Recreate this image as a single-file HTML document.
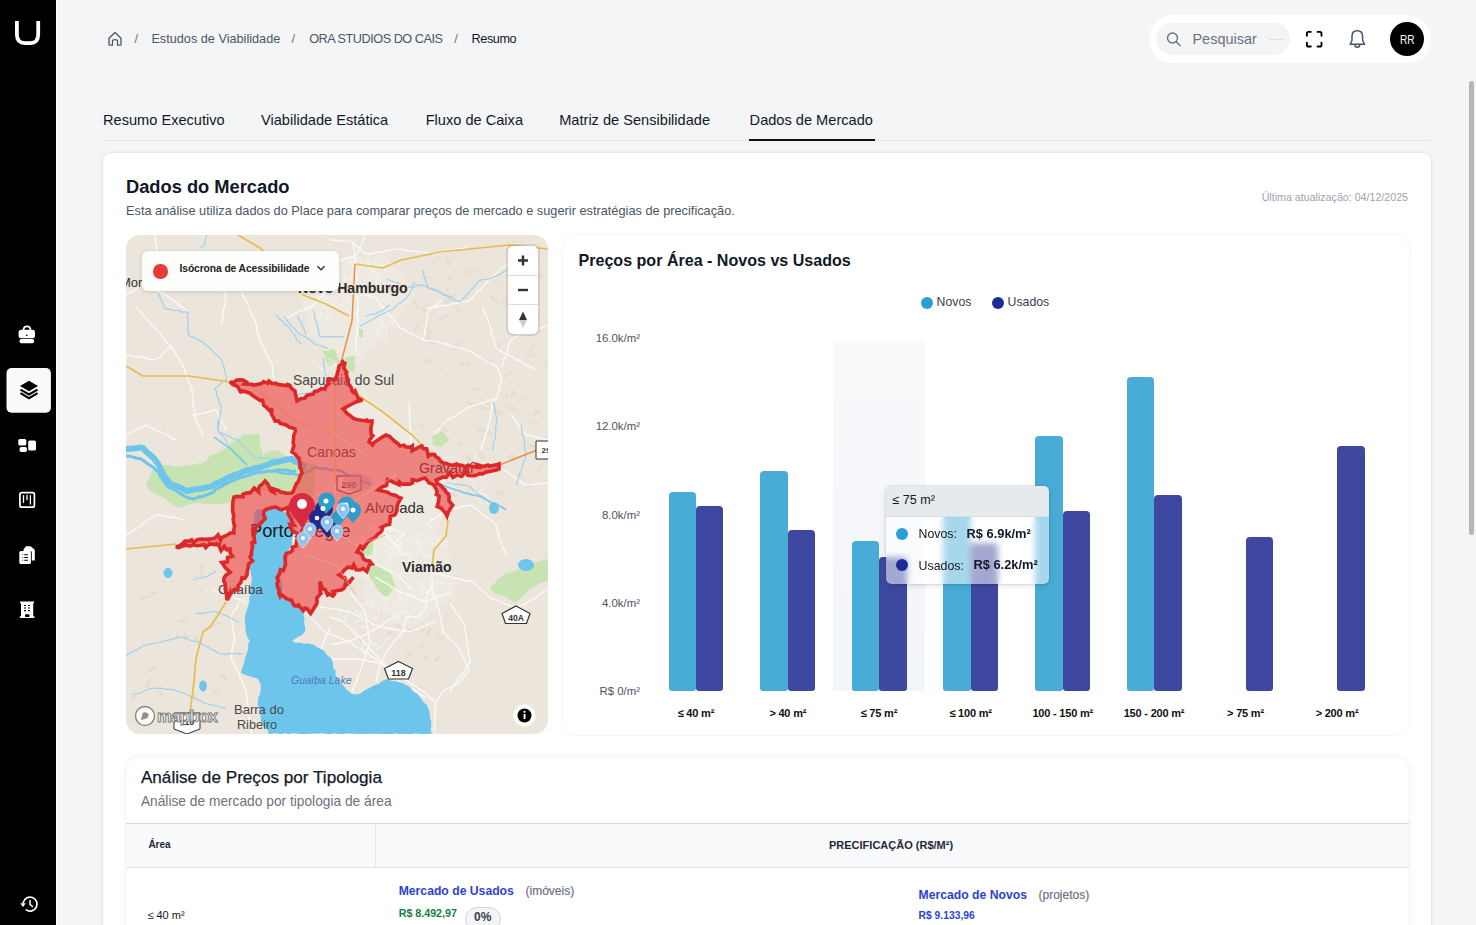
<!DOCTYPE html>
<html><head><meta charset="utf-8">
<style>
*{box-sizing:border-box;margin:0;padding:0}
html,body{width:1476px;height:925px;overflow:hidden}
body{font-family:"Liberation Sans",sans-serif;background:#f4f5f7;position:relative;color:#111827}
.abs{position:absolute}
.t{position:absolute;white-space:nowrap;line-height:1}
#side{left:0;top:0;width:56px;height:925px;background:#000}
#sideline{left:56px;top:0;width:1px;height:925px;background:#fff}
#pill{left:1149px;top:15px;width:282px;height:48px;border-radius:24px;background:#fff}
#search{left:1156px;top:23px;width:134px;height:32px;border-radius:16px;background:#f3f4f6}
#avatar{left:1390px;top:22px;width:34px;height:34px;border-radius:50%;background:#000}
#tabline{left:103px;top:140px;width:1328px;height:1px;background:#e5e7eb}
#tabul{left:749px;top:139px;width:126px;height:2px;background:#111}
#card{left:103px;top:153px;width:1328px;height:800px;background:#fff;border-radius:8px;box-shadow:0 0 0 1px rgba(0,0,0,0.02),0 0 5px rgba(0,0,0,0.07)}
#map{left:126px;top:235px;width:422px;height:499px;border-radius:14px;overflow:hidden;background:#ece6dd;box-shadow:0 0 0 1px rgba(0,0,0,0.07)}
#chart{left:563px;top:235px;width:846px;height:500px;border-radius:14px;background:#fff;box-shadow:0 0 0 1px rgba(0,0,0,0.015),0 0 4px rgba(0,0,0,0.04)}
#card2{left:126px;top:757px;width:1283px;height:300px;border-radius:12px;background:#fff;box-shadow:0 0 0 1px rgba(0,0,0,0.02),0 0 6px rgba(0,0,0,0.06);overflow:hidden}
#scroll{left:1469px;top:81px;width:5px;height:454px;border-radius:3px;background:#b5b6b8}
.bar{position:absolute;border-radius:4px 4px 3px 3px}
.nv{background:#48acd6}
.us{background:#3f48a0}
.xl{position:absolute;top:707px;font-size:11px;font-weight:700;color:#111;width:100px;text-align:center;line-height:12px;letter-spacing:-0.2px}
.yl{position:absolute;left:560px;width:80px;text-align:right;font-size:11.4px;color:#4b5563;line-height:12px}
</style></head>
<body>
<div id="side" class="abs"></div>
<div id="sideline" class="abs"></div>
<div id="scroll" class="abs"></div>
<!-- sidebar icons -->
<svg class="abs" style="left:0;top:0" width="56" height="925" viewBox="0 0 56 925">
  <path d="M16.9,21 V34.5 Q16.9,43.1 25,43.1 H30.5 Q38.2,43.1 38.2,34.5 V21" fill="none" stroke="#fff" stroke-width="3.8"/>
  <!-- briefcase -->
  <path d="M23.5,330.5 Q23.5,326.3 27,326.3 Q30.5,326.3 30.5,330.5" fill="none" stroke="#fff" stroke-width="1.8"/>
  <rect x="18.6" y="329.8" width="16.4" height="8.4" rx="2.5" fill="#fff"/>
  <rect x="19.5" y="339" width="14.6" height="4.2" rx="1.8" fill="#fff"/>
  <circle cx="26.8" cy="335.4" r="0.8" fill="#000"/>
  <!-- active box -->
  <rect x="6.5" y="368" width="44.4" height="44.7" rx="5" fill="#f8f9fb"/>
  <path d="M29,380.8 L38,386 L29,391.2 L20,386 Z" fill="#000"/>
  <path d="M20.5,389.6 L29,394.5 L37.5,389.6" fill="none" stroke="#000" stroke-width="2.1" stroke-linejoin="miter"/>
  <path d="M20.5,393.2 L29,398.2 L37.5,393.2" fill="none" stroke="#000" stroke-width="2.1"/>
  <!-- dashboard -->
  <rect x="18.3" y="439" width="8" height="6.6" rx="1.6" fill="#fff"/>
  <rect x="19.6" y="446.9" width="7.3" height="5" rx="1.6" fill="#fff"/>
  <rect x="28.2" y="440.4" width="7.8" height="10.2" rx="1.6" fill="#fff"/>
  <!-- kanban -->
  <rect x="19.9" y="492.7" width="14.5" height="14.5" rx="2" fill="none" stroke="#fff" stroke-width="1.7"/>
  <path d="M23.5,495.6 V502.3 M27,495.4 V499.7 M30.4,495.6 V504" stroke="#fff" stroke-width="1.3" stroke-linecap="round"/>
  <!-- copy docs -->
  <path d="M23.5,549.5 L26,546.3 H30.5 L34.8,549.8 V560.5 H31.8 V551.6 H23.5 Z" fill="#fff"/>
  <rect x="19.3" y="551" width="11.6" height="13" rx="1.6" fill="#fff"/>
  <path d="M22.5,554.8 H23.2 M24.2,554.8 H28 M22.5,557.5 H23.2 M24.2,557.5 H28 M22.5,560.2 H23.2 M24.2,560.2 H28" stroke="#000" stroke-width="1.1"/>
  <!-- building -->
  <path d="M20,601.5 H34 V603.2 H33.2 V616.3 H34.4 V618 H19.8 V616.3 H21 V603.2 H20.2 Z" fill="#fff"/>
  <path d="M24,605.5 H26 M28,605.5 H30 M24,608 H26 M28,608 H30 M24,610.7 H26 M28,610.7 H30" stroke="#000" stroke-width="1.2"/>
  <rect x="25" y="614.2" width="4.5" height="2.8" rx="0.8" fill="#000"/>
  <!-- history -->
  <path d="M23.2,902.6 A7,7 0 1 1 26.2,909.9" fill="none" stroke="#fff" stroke-width="1.7" stroke-linecap="round"/>
  <path d="M20.3,903.3 L25.8,903.3 L23,906.9 Z" fill="#fff"/>
  <path d="M30,900.4 V904.3 L32.4,906.5" fill="none" stroke="#fff" stroke-width="1.5" stroke-linecap="round"/>
</svg>

<!-- header -->
<svg class="abs" style="left:106px;top:30px" width="18" height="18" viewBox="0 0 18 18">
  <path d="M3,8.2 L9,2.6 L15,8.2 V14.5 Q15,15.2 14.3,15.2 H11.5 V10.9 Q11.5,9.6 9,9.6 Q6.5,9.6 6.5,10.9 V15.2 H3.7 Q3,15.2 3,14.5 Z" fill="none" stroke="#4b5563" stroke-width="1.3" stroke-linejoin="round"/>
</svg>
<div class="t" style="left:134.5px;top:32.5px;font-size:12.7px;color:#6b7280">/</div>
<div class="t" style="left:151.4px;top:32.5px;font-size:12.7px;color:#4b5563">Estudos de Viabilidade</div>
<div class="t" style="left:291.5px;top:32.5px;font-size:12.7px;color:#6b7280">/</div>
<div class="t" style="left:309.2px;top:32.5px;font-size:12.7px;color:#4b5563;letter-spacing:-0.48px">ORA STUDIOS DO CAIS</div>
<div class="t" style="left:454.2px;top:32.5px;font-size:12.7px;color:#6b7280">/</div>
<div class="t" style="left:471.6px;top:32.5px;font-size:12.7px;color:#111827;letter-spacing:-0.45px">Resumo</div>

<div id="pill" class="abs"></div>
<div id="search" class="abs"></div>
<svg class="abs" style="left:1164px;top:30px" width="20" height="18" viewBox="0 0 20 18">
  <circle cx="8.5" cy="8" r="5" fill="none" stroke="#6b7280" stroke-width="1.4"/>
  <path d="M12.2,11.7 L16,15.5" stroke="#6b7280" stroke-width="1.4" stroke-linecap="round"/>
</svg>
<div class="t" style="left:1192.4px;top:31.9px;font-size:14.5px;color:#6b7280">Pesquisar</div>
<div class="abs" style="left:1269px;top:38.5px;width:16px;height:1.5px;background:#dfe2e6"></div>
<svg class="abs" style="left:1304px;top:29px" width="20" height="20" viewBox="0 0 20 20">
  <path d="M2.9,6.8 V4.5 Q2.9,2.9 4.5,2.9 H6.8 M13.6,2.9 H15.9 Q17.5,2.9 17.5,4.5 V6.8 M17.5,13.6 V15.9 Q17.5,17.5 15.9,17.5 H13.6 M6.8,17.5 H4.5 Q2.9,17.5 2.9,15.9 V13.6" fill="none" stroke="#000" stroke-width="1.9" stroke-linecap="round"/>
</svg>
<svg class="abs" style="left:1347px;top:29px" width="20" height="20" viewBox="0 0 20 20">
  <path d="M3.2,15.2 L5,11.2 V7.4 Q5,1.8 10.3,1.8 Q15.6,1.8 15.6,7.4 V11.2 L17.5,15.2 Z" fill="none" stroke="#475569" stroke-width="1.5" stroke-linejoin="round"/>
  <path d="M7.8,15.5 Q7.8,18.3 10.3,18.3 Q12.8,18.3 12.8,15.5" fill="none" stroke="#475569" stroke-width="1.5"/>
</svg>
<div id="avatar" class="abs"></div>
<div class="t" style="left:1399.6px;top:32.9px;font-size:13px;color:#fff;transform:scaleX(0.78);transform-origin:0 0">RR</div>

<!-- tabs -->
<div class="t" style="left:103px;top:112.6px;font-size:14.6px;color:#111827">Resumo Executivo</div>
<div class="t" style="left:261px;top:112.6px;font-size:14.6px;color:#111827">Viabilidade Estática</div>
<div class="t" style="left:425.7px;top:112.6px;font-size:14.6px;color:#111827">Fluxo de Caixa</div>
<div class="t" style="left:559.2px;top:112.6px;font-size:14.6px;color:#111827">Matriz de Sensibilidade</div>
<div class="t" style="left:749.6px;top:112.6px;font-size:14.6px;color:#111827">Dados de Mercado</div>
<div id="tabline" class="abs"></div>
<div id="tabul" class="abs"></div>

<div id="card" class="abs"></div>
<div class="t" style="left:126px;top:177.9px;font-size:18.3px;font-weight:700;color:#111827">Dados do Mercado</div>
<div class="t" style="left:126px;top:205.4px;font-size:12.77px;color:#4b5563">Esta análise utiliza dados do Place para comparar preços de mercado e sugerir estratégias de precificação.</div>
<div class="t" style="left:1258px;top:191.7px;font-size:10.66px;color:#9ca3af;width:150px;text-align:right">Última atualização: 04/12/2025</div>
<svg class="abs" style="left:126px;top:235px" width="422" height="499" viewBox="0 0 422 499">
<defs><clipPath id="mc"><rect x="0" y="0" width="422" height="499" rx="14"/></clipPath></defs>
<g clip-path="url(#mc)">
<rect width="422" height="499" fill="#ebe5dc"/>
<ellipse cx="350" cy="154" rx="6.6" ry="1.7" transform="rotate(1 350 154)" fill="#ddd6c8" opacity="0.45"/>
<ellipse cx="368" cy="64" rx="4.6" ry="1.9" transform="rotate(41 368 64)" fill="#ddd6c8" opacity="0.45"/>
<ellipse cx="302" cy="93" rx="2.5" ry="2.2" transform="rotate(27 302 93)" fill="#ddd6c8" opacity="0.45"/>
<ellipse cx="296" cy="256" rx="6.8" ry="2.0" transform="rotate(16 296 256)" fill="#ddd6c8" opacity="0.45"/>
<ellipse cx="311" cy="24" rx="4.6" ry="1.1" transform="rotate(-43 311 24)" fill="#ddd6c8" opacity="0.45"/>
<ellipse cx="322" cy="27" rx="4.3" ry="1.7" transform="rotate(48 322 27)" fill="#ddd6c8" opacity="0.45"/>
<ellipse cx="359" cy="174" rx="4.5" ry="2.0" transform="rotate(-6 359 174)" fill="#ddd6c8" opacity="0.45"/>
<ellipse cx="327" cy="259" rx="7.0" ry="2.3" transform="rotate(29 327 259)" fill="#ddd6c8" opacity="0.45"/>
<ellipse cx="332" cy="75" rx="3.4" ry="1.1" transform="rotate(37 332 75)" fill="#ddd6c8" opacity="0.45"/>
<ellipse cx="343" cy="223" rx="3.9" ry="2.4" transform="rotate(49 343 223)" fill="#ddd6c8" opacity="0.45"/>
<ellipse cx="290" cy="70" rx="6.6" ry="1.7" transform="rotate(67 290 70)" fill="#ddd6c8" opacity="0.45"/>
<ellipse cx="342" cy="38" rx="5.1" ry="2.2" transform="rotate(-32 342 38)" fill="#ddd6c8" opacity="0.45"/>
<ellipse cx="302" cy="100" rx="6.8" ry="2.1" transform="rotate(-53 302 100)" fill="#ddd6c8" opacity="0.45"/>
<ellipse cx="323" cy="44" rx="2.3" ry="2.2" transform="rotate(-45 323 44)" fill="#ddd6c8" opacity="0.45"/>
<ellipse cx="364" cy="127" rx="3.0" ry="2.1" transform="rotate(-52 364 127)" fill="#ddd6c8" opacity="0.45"/>
<ellipse cx="375" cy="48" rx="4.1" ry="1.3" transform="rotate(-32 375 48)" fill="#ddd6c8" opacity="0.45"/>
<ellipse cx="418" cy="213" rx="3.5" ry="2.3" transform="rotate(-41 418 213)" fill="#ddd6c8" opacity="0.45"/>
<ellipse cx="342" cy="225" rx="5.2" ry="1.2" transform="rotate(69 342 225)" fill="#ddd6c8" opacity="0.45"/>
<ellipse cx="318" cy="82" rx="5.9" ry="1.5" transform="rotate(-29 318 82)" fill="#ddd6c8" opacity="0.45"/>
<ellipse cx="300" cy="42" rx="4.9" ry="1.4" transform="rotate(14 300 42)" fill="#ddd6c8" opacity="0.45"/>
<ellipse cx="339" cy="129" rx="6.8" ry="1.7" transform="rotate(10 339 129)" fill="#ddd6c8" opacity="0.45"/>
<ellipse cx="404" cy="64" rx="2.8" ry="2.4" transform="rotate(44 404 64)" fill="#ddd6c8" opacity="0.45"/>
<ellipse cx="323" cy="66" rx="5.7" ry="2.4" transform="rotate(-42 323 66)" fill="#ddd6c8" opacity="0.45"/>
<ellipse cx="415" cy="232" rx="5.0" ry="1.6" transform="rotate(-55 415 232)" fill="#ddd6c8" opacity="0.45"/>
<ellipse cx="295" cy="251" rx="3.2" ry="2.1" transform="rotate(-34 295 251)" fill="#ddd6c8" opacity="0.45"/>
<ellipse cx="399" cy="163" rx="3.5" ry="1.3" transform="rotate(31 399 163)" fill="#ddd6c8" opacity="0.45"/>
<ellipse cx="299" cy="75" rx="4.8" ry="2.3" transform="rotate(16 299 75)" fill="#ddd6c8" opacity="0.45"/>
<ellipse cx="327" cy="240" rx="3.0" ry="1.0" transform="rotate(-32 327 240)" fill="#ddd6c8" opacity="0.45"/>
<ellipse cx="349" cy="35" rx="2.9" ry="1.6" transform="rotate(10 349 35)" fill="#ddd6c8" opacity="0.45"/>
<ellipse cx="307" cy="107" rx="6.5" ry="2.5" transform="rotate(22 307 107)" fill="#ddd6c8" opacity="0.45"/>
<ellipse cx="381" cy="160" rx="2.7" ry="1.1" transform="rotate(-67 381 160)" fill="#ddd6c8" opacity="0.45"/>
<ellipse cx="410" cy="188" rx="6.8" ry="1.0" transform="rotate(19 410 188)" fill="#ddd6c8" opacity="0.45"/>
<ellipse cx="354" cy="195" rx="3.6" ry="2.5" transform="rotate(-59 354 195)" fill="#ddd6c8" opacity="0.45"/>
<ellipse cx="362" cy="197" rx="6.5" ry="2.1" transform="rotate(29 362 197)" fill="#ddd6c8" opacity="0.45"/>
<ellipse cx="395" cy="240" rx="3.8" ry="2.0" transform="rotate(56 395 240)" fill="#ddd6c8" opacity="0.45"/>
<ellipse cx="405" cy="120" rx="6.0" ry="2.3" transform="rotate(10 405 120)" fill="#ddd6c8" opacity="0.45"/>
<ellipse cx="372" cy="112" rx="4.9" ry="1.9" transform="rotate(-59 372 112)" fill="#ddd6c8" opacity="0.45"/>
<ellipse cx="374" cy="258" rx="6.4" ry="2.1" transform="rotate(-16 374 258)" fill="#ddd6c8" opacity="0.45"/>
<ellipse cx="387" cy="159" rx="4.2" ry="2.3" transform="rotate(-58 387 159)" fill="#ddd6c8" opacity="0.45"/>
<ellipse cx="389" cy="27" rx="5.0" ry="1.7" transform="rotate(-38 389 27)" fill="#ddd6c8" opacity="0.45"/>
<ellipse cx="382" cy="139" rx="5.1" ry="2.4" transform="rotate(-34 382 139)" fill="#ddd6c8" opacity="0.45"/>
<ellipse cx="291" cy="92" rx="5.4" ry="1.3" transform="rotate(-46 291 92)" fill="#ddd6c8" opacity="0.45"/>
<ellipse cx="410" cy="178" rx="4.2" ry="2.3" transform="rotate(-24 410 178)" fill="#ddd6c8" opacity="0.45"/>
<ellipse cx="378" cy="68" rx="4.2" ry="2.2" transform="rotate(58 378 68)" fill="#ddd6c8" opacity="0.45"/>
<ellipse cx="406" cy="112" rx="4.9" ry="1.5" transform="rotate(-51 406 112)" fill="#ddd6c8" opacity="0.45"/>
<ellipse cx="356" cy="221" rx="6.2" ry="2.1" transform="rotate(63 356 221)" fill="#ddd6c8" opacity="0.45"/>
<ellipse cx="327" cy="61" rx="4.3" ry="1.4" transform="rotate(-40 327 61)" fill="#ddd6c8" opacity="0.45"/>
<ellipse cx="345" cy="170" rx="4.5" ry="1.5" transform="rotate(47 345 170)" fill="#ddd6c8" opacity="0.45"/>
<ellipse cx="420" cy="129" rx="2.4" ry="1.0" transform="rotate(52 420 129)" fill="#ddd6c8" opacity="0.45"/>
<ellipse cx="295" cy="190" rx="4.9" ry="1.5" transform="rotate(41 295 190)" fill="#ddd6c8" opacity="0.45"/>
<ellipse cx="293" cy="53" rx="4.3" ry="1.0" transform="rotate(46 293 53)" fill="#ddd6c8" opacity="0.45"/>
<ellipse cx="321" cy="54" rx="2.2" ry="1.9" transform="rotate(-7 321 54)" fill="#ddd6c8" opacity="0.45"/>
<ellipse cx="373" cy="177" rx="6.0" ry="2.4" transform="rotate(26 373 177)" fill="#ddd6c8" opacity="0.45"/>
<ellipse cx="316" cy="134" rx="2.9" ry="1.0" transform="rotate(-4 316 134)" fill="#ddd6c8" opacity="0.45"/>
<ellipse cx="384" cy="63" rx="3.4" ry="1.5" transform="rotate(28 384 63)" fill="#ddd6c8" opacity="0.45"/>
<ellipse cx="359" cy="167" rx="5.8" ry="1.6" transform="rotate(41 359 167)" fill="#ddd6c8" opacity="0.45"/>
<ellipse cx="410" cy="41" rx="6.7" ry="2.1" transform="rotate(-52 410 41)" fill="#ddd6c8" opacity="0.45"/>
<ellipse cx="350" cy="170" rx="6.5" ry="1.6" transform="rotate(10 350 170)" fill="#ddd6c8" opacity="0.45"/>
<ellipse cx="406" cy="211" rx="6.7" ry="1.7" transform="rotate(21 406 211)" fill="#ddd6c8" opacity="0.45"/>
<ellipse cx="317" cy="193" rx="6.1" ry="2.0" transform="rotate(30 317 193)" fill="#ddd6c8" opacity="0.45"/>
<ellipse cx="318" cy="236" rx="6.9" ry="2.5" transform="rotate(5 318 236)" fill="#ddd6c8" opacity="0.45"/>
<ellipse cx="394" cy="97" rx="6.5" ry="2.3" transform="rotate(-21 394 97)" fill="#ddd6c8" opacity="0.45"/>
<ellipse cx="301" cy="126" rx="4.8" ry="2.2" transform="rotate(-2 301 126)" fill="#ddd6c8" opacity="0.45"/>
<ellipse cx="294" cy="214" rx="2.3" ry="2.2" transform="rotate(-46 294 214)" fill="#ddd6c8" opacity="0.45"/>
<ellipse cx="334" cy="209" rx="2.7" ry="1.2" transform="rotate(2 334 209)" fill="#ddd6c8" opacity="0.45"/>
<ellipse cx="386" cy="222" rx="5.4" ry="2.4" transform="rotate(-1 386 222)" fill="#ddd6c8" opacity="0.45"/>
<ellipse cx="415" cy="41" rx="3.1" ry="1.8" transform="rotate(-29 415 41)" fill="#ddd6c8" opacity="0.45"/>
<ellipse cx="386" cy="173" rx="4.6" ry="2.3" transform="rotate(8 386 173)" fill="#ddd6c8" opacity="0.45"/>
<ellipse cx="331" cy="111" rx="6.2" ry="2.4" transform="rotate(-41 331 111)" fill="#ddd6c8" opacity="0.45"/>
<ellipse cx="402" cy="252" rx="4.6" ry="1.9" transform="rotate(-42 402 252)" fill="#ddd6c8" opacity="0.45"/>
<ellipse cx="59" cy="400" rx="3.8" ry="1.0" transform="rotate(66 59 400)" fill="#dcd5c6" opacity="0.5"/>
<ellipse cx="57" cy="386" rx="4.4" ry="1.6" transform="rotate(-1 57 386)" fill="#dcd5c6" opacity="0.5"/>
<ellipse cx="76" cy="339" rx="3.6" ry="1.4" transform="rotate(64 76 339)" fill="#dcd5c6" opacity="0.5"/>
<ellipse cx="102" cy="368" rx="3.4" ry="1.1" transform="rotate(-9 102 368)" fill="#dcd5c6" opacity="0.5"/>
<ellipse cx="90" cy="456" rx="3.4" ry="1.3" transform="rotate(-43 90 456)" fill="#dcd5c6" opacity="0.5"/>
<ellipse cx="68" cy="460" rx="2.4" ry="1.8" transform="rotate(-67 68 460)" fill="#dcd5c6" opacity="0.5"/>
<ellipse cx="21" cy="362" rx="4.1" ry="1.3" transform="rotate(-20 21 362)" fill="#dcd5c6" opacity="0.5"/>
<ellipse cx="68" cy="345" rx="4.2" ry="1.1" transform="rotate(1 68 345)" fill="#dcd5c6" opacity="0.5"/>
<ellipse cx="28" cy="358" rx="3.6" ry="1.4" transform="rotate(-17 28 358)" fill="#dcd5c6" opacity="0.5"/>
<ellipse cx="45" cy="404" rx="2.5" ry="1.2" transform="rotate(18 45 404)" fill="#dcd5c6" opacity="0.5"/>
<ellipse cx="70" cy="404" rx="4.6" ry="1.6" transform="rotate(50 70 404)" fill="#dcd5c6" opacity="0.5"/>
<ellipse cx="26" cy="434" rx="4.4" ry="1.9" transform="rotate(-26 26 434)" fill="#dcd5c6" opacity="0.5"/>
<ellipse cx="35" cy="459" rx="2.7" ry="2.0" transform="rotate(54 35 459)" fill="#dcd5c6" opacity="0.5"/>
<ellipse cx="15" cy="364" rx="4.2" ry="1.3" transform="rotate(-56 15 364)" fill="#dcd5c6" opacity="0.5"/>
<ellipse cx="92" cy="389" rx="4.4" ry="1.1" transform="rotate(-14 92 389)" fill="#dcd5c6" opacity="0.5"/>
<ellipse cx="75" cy="332" rx="2.6" ry="1.7" transform="rotate(58 75 332)" fill="#dcd5c6" opacity="0.5"/>
<ellipse cx="107" cy="346" rx="3.5" ry="1.8" transform="rotate(0 107 346)" fill="#dcd5c6" opacity="0.5"/>
<ellipse cx="75" cy="356" rx="2.2" ry="1.1" transform="rotate(-65 75 356)" fill="#dcd5c6" opacity="0.5"/>
<ellipse cx="61" cy="402" rx="3.7" ry="1.1" transform="rotate(-44 61 402)" fill="#dcd5c6" opacity="0.5"/>
<ellipse cx="22" cy="448" rx="5.0" ry="1.9" transform="rotate(-57 22 448)" fill="#dcd5c6" opacity="0.5"/>
<ellipse cx="7" cy="463" rx="3.4" ry="1.8" transform="rotate(-24 7 463)" fill="#dcd5c6" opacity="0.5"/>
<ellipse cx="51" cy="402" rx="3.3" ry="1.6" transform="rotate(-68 51 402)" fill="#dcd5c6" opacity="0.5"/>
<ellipse cx="77" cy="448" rx="2.5" ry="1.5" transform="rotate(34 77 448)" fill="#dcd5c6" opacity="0.5"/>
<ellipse cx="45" cy="357" rx="2.5" ry="1.5" transform="rotate(-68 45 357)" fill="#dcd5c6" opacity="0.5"/>
<ellipse cx="98" cy="442" rx="4.1" ry="1.9" transform="rotate(18 98 442)" fill="#dcd5c6" opacity="0.5"/>
<ellipse cx="266" cy="438" rx="3.5" ry="2.0" transform="rotate(43 266 438)" fill="#dcd5c6" opacity="0.5"/>
<ellipse cx="253" cy="463" rx="4.2" ry="1.8" transform="rotate(44 253 463)" fill="#dcd5c6" opacity="0.5"/>
<ellipse cx="267" cy="462" rx="4.6" ry="1.7" transform="rotate(37 267 462)" fill="#dcd5c6" opacity="0.5"/>
<ellipse cx="299" cy="422" rx="4.2" ry="1.1" transform="rotate(-22 299 422)" fill="#dcd5c6" opacity="0.5"/>
<ellipse cx="272" cy="391" rx="3.1" ry="1.6" transform="rotate(17 272 391)" fill="#dcd5c6" opacity="0.5"/>
<ellipse cx="251" cy="466" rx="4.0" ry="1.3" transform="rotate(22 251 466)" fill="#dcd5c6" opacity="0.5"/>
<ellipse cx="281" cy="433" rx="3.2" ry="2.0" transform="rotate(20 281 433)" fill="#dcd5c6" opacity="0.5"/>
<ellipse cx="293" cy="451" rx="4.9" ry="1.0" transform="rotate(16 293 451)" fill="#dcd5c6" opacity="0.5"/>
<ellipse cx="296" cy="411" rx="3.2" ry="1.1" transform="rotate(-43 296 411)" fill="#dcd5c6" opacity="0.5"/>
<ellipse cx="264" cy="398" rx="2.8" ry="1.9" transform="rotate(7 264 398)" fill="#dcd5c6" opacity="0.5"/>
<ellipse cx="276" cy="467" rx="3.7" ry="2.0" transform="rotate(19 276 467)" fill="#dcd5c6" opacity="0.5"/>
<ellipse cx="303" cy="396" rx="3.8" ry="1.8" transform="rotate(-64 303 396)" fill="#dcd5c6" opacity="0.5"/>
<ellipse cx="314" cy="403" rx="3.4" ry="1.2" transform="rotate(-1 314 403)" fill="#dcd5c6" opacity="0.5"/>
<ellipse cx="285" cy="395" rx="4.8" ry="1.4" transform="rotate(4 285 395)" fill="#dcd5c6" opacity="0.5"/>
<ellipse cx="284" cy="419" rx="2.9" ry="1.7" transform="rotate(8 284 419)" fill="#dcd5c6" opacity="0.5"/>
<ellipse cx="256" cy="447" rx="2.9" ry="1.0" transform="rotate(-36 256 447)" fill="#dcd5c6" opacity="0.5"/>
<ellipse cx="234" cy="403" rx="4.3" ry="1.4" transform="rotate(56 234 403)" fill="#dcd5c6" opacity="0.5"/>
<ellipse cx="297" cy="394" rx="5.0" ry="1.9" transform="rotate(-60 297 394)" fill="#dcd5c6" opacity="0.5"/>
<ellipse cx="311" cy="424" rx="3.4" ry="2.0" transform="rotate(-36 311 424)" fill="#dcd5c6" opacity="0.5"/>
<ellipse cx="277" cy="465" rx="4.2" ry="1.5" transform="rotate(67 277 465)" fill="#dcd5c6" opacity="0.5"/>
<path d="M170.0,25.0 L260.0,20.0 L290.0,60.0 L250.0,110.0 L220.0,130.0 L185.0,100.0 L175.0,60.0 Z" fill="#efebe4" opacity="0.8"/>
<path d="M180.0,150.0 L240.0,160.0 L290.0,200.0 L330.0,250.0 L310.0,300.0 L260.0,330.0 L200.0,360.0 L160.0,320.0 L150.0,250.0 Z" fill="#efebe4" opacity="0.8"/>
<path d="M230.0,300.0 L320.0,300.0 L330.0,360.0 L290.0,390.0 L240.0,370.0 Z" fill="#efebe4" opacity="0.8"/>
<path d="M20.0,249.0 L23.6,242.7 L26.0,236.0 L31.2,233.2 L38.0,230.0 L42.9,230.1 L47.1,231.4 L53.0,232.0 L57.4,230.9 L63.7,229.9 L68.1,229.2 L73.6,228.6 L79.0,227.0 L85.0,220.0 L91.6,218.0 L98.0,214.0 L102.9,211.5 L105.5,207.2 L110.8,205.6 L114.2,201.7 L118.0,199.0 L122.5,199.4 L128.1,199.2 L133.0,199.0 L134.0,204.8 L133.9,209.0 L136.2,215.6 L136.0,220.0 L141.8,217.4 L145.1,216.2 L151.0,215.0 L155.9,217.9 L160.2,220.4 L166.0,223.0 L174.0,226.0 L178.1,226.5 L184.4,228.8 L189.0,230.0 L189.3,234.9 L189.0,239.8 L188.7,246.0 L189.7,249.8 L188.2,256.5 L189.0,261.0 L183.5,260.8 L176.9,259.3 L171.3,259.4 L166.0,258.0 L160.7,257.6 L157.0,256.3 L151.0,256.0 L146.1,256.5 L141.8,255.9 L136.0,256.0 L130.7,255.2 L126.8,255.2 L121.0,256.0 L115.2,259.8 L111.0,263.7 L106.0,267.0 L100.6,268.6 L95.2,268.4 L91.0,270.0 L85.6,268.7 L79.1,269.4 L74.1,268.1 L68.0,268.0 L62.3,269.4 L58.5,271.1 L53.0,273.0 L48.0,270.7 L44.6,268.3 L41.1,265.6 L36.0,262.0 L29.4,259.1 L23.0,255.0 Z" fill="#c7e3b2"/>
<path d="M241.0,334.0 L246.6,331.6 L253.0,330.0 L257.1,334.5 L262.5,336.8 L266.0,341.0 L267.7,346.2 L270.0,352.0 L266.4,355.8 L263.1,359.4 L260.0,364.0 L256.8,360.6 L253.4,356.7 L250.0,352.0 L246.6,345.9 L243.0,341.0 Z" fill="#c7e3b2"/>
<path d="M364.0,352.0 L368.5,349.3 L371.6,344.0 L376.0,341.6 L380.0,338.0 L387.1,336.9 L394.0,334.0 L400.3,332.3 L405.1,329.4 L412.0,327.0 L417.6,324.7 L422.0,324.0 L421.2,329.7 L422.8,333.7 L422.3,339.0 L422.0,345.0 L417.7,347.5 L412.0,348.9 L408.3,351.8 L403.0,354.0 L398.9,358.5 L393.3,364.3 L389.0,368.0 L383.8,364.5 L378.0,361.0 L372.1,359.4 L366.0,357.0 Z" fill="#c7e3b2"/>
<path d="M234.0,310.0 L241.4,308.8 L248.0,306.0 L246.8,313.7 L246.0,320.0 L240.3,320.7 L234.0,320.0 L234.6,315.7 Z" fill="#c7e3b2"/>
<path d="M196.0,116.0 L202.8,115.4 L208.0,113.0 L210.3,118.0 L212.4,123.6 L214.0,128.0 L208.3,129.3 L203.0,131.0 L200.0,126.5 L199.3,120.8 Z" fill="#c7e3b2"/>
<path d="M219.0,123.0 L223.3,121.4 L229.0,121.0 L228.5,125.9 L229.3,130.8 L228.0,137.0 L219.0,136.0 L218.6,128.7 Z" fill="#c7e3b2"/>
<path d="M306.0,201.0 L311.3,199.1 L316.0,196.0 L318.9,199.6 L323.0,205.0 L318.9,208.7 L315.0,212.0 L307.0,210.0 Z" fill="#c7e3b2"/>
<path d="M233.0,94.0 L237.0,94.0 L237.0,102.0 L233.0,102.0 Z" fill="#c7e3b2"/>
<path d="M172.0,499.0 L176.6,494.3 L178.7,490.9 L182.7,487.2 L187.0,484.0 L188.4,489.2 L188.4,493.4 L190.0,499.0 L183.6,498.3 L178.5,498.6 Z" fill="#c7e3b2"/>
<path d="M29.0,0.0 L29.6,4.6 L30.0,8.2 L31.0,13.2 L31.0,17.0 L28.8,21.4 L27.5,25.6 L25.0,30.0" fill="none" stroke="#fbfaf7" stroke-width="1.4" stroke-linejoin="round"/>
<path d="M9.0,71.0 L11.5,73.6 L15.2,77.7 L17.4,80.5 L20.4,83.4 L23.8,87.0 L25.7,89.4 L28.8,93.0 L32.0,96.6 L34.6,99.1 L36.9,102.5 L39.9,106.3 L43.0,109.0 L45.4,112.8 L48.3,116.1 L50.0,119.6 L52.7,123.1 L55.1,127.7 L57.0,131.0 L58.9,134.3 L59.7,138.9 L61.0,142.5 L63.0,146.9 L64.6,150.6 L66.0,154.0 L66.2,158.5 L66.8,162.8 L66.8,166.8 L67.4,170.6 L68.2,174.3 L69.0,178.6 L69.0,183.0 L70.8,186.7 L72.8,191.5 L75.3,195.6 L77.0,200.0" fill="none" stroke="#fbfaf7" stroke-width="1.4" stroke-linejoin="round"/>
<path d="M114.0,54.0 L116.1,57.5 L117.6,62.0 L120.2,66.4 L121.7,69.4 L123.2,74.3 L124.9,78.1 L127.1,81.4 L129.0,86.0 L130.6,90.4 L130.6,94.1 L131.7,97.9 L133.0,101.8 L134.0,106.0 L135.8,109.7 L138.2,113.4 L139.6,117.8 L141.8,121.9 L144.1,125.4 L146.0,129.0 L146.4,133.4 L146.7,136.6 L147.3,141.2 L148.6,144.6 L149.0,149.0" fill="none" stroke="#fbfaf7" stroke-width="1.4" stroke-linejoin="round"/>
<path d="M160.0,83.0 L163.6,81.7 L167.5,79.1 L170.8,77.4 L174.4,76.0 L178.1,74.9 L182.2,72.7 L186.0,71.0 L189.7,67.8 L193.4,63.9 L196.3,60.4 L200.0,57.0" fill="none" stroke="#fbfaf7" stroke-width="1.4" stroke-linejoin="round"/>
<path d="M0.0,60.0 L2.8,57.7 L7.0,56.2 L10.5,53.6 L13.7,50.6 L17.0,49.0 L20.6,50.6 L24.8,52.2 L28.4,54.5 L32.7,56.7 L36.3,57.8 L40.0,60.0 L43.7,63.0 L46.7,64.8 L50.0,67.1 L53.6,70.6 L56.7,72.8 L60.0,75.0" fill="none" stroke="#fbfaf7" stroke-width="1.4" stroke-linejoin="round"/>
<path d="M274.0,93.0 L278.2,94.6 L282.2,97.2 L285.1,98.5 L289.0,101.1 L293.4,102.8 L297.0,105.0 L302.1,105.6 L306.2,106.1 L311.4,107.0 L315.9,108.3 L320.0,109.0 L323.9,110.2 L327.4,111.8 L332.1,112.9 L335.5,113.2 L339.6,114.6 L343.0,116.0 L347.0,117.7 L350.1,120.4 L353.1,122.1 L356.5,123.4 L360.1,126.6 L364.5,128.2 L367.3,130.2 L371.0,132.0 L373.0,135.9 L374.4,140.4 L376.0,144.0 L374.2,148.4 L373.5,153.1 L372.1,158.3 L371.0,163.0 L366.6,164.3 L362.7,165.7 L358.8,167.0 L354.4,168.3 L350.6,170.0 L347.1,170.7 L343.0,172.0 L339.1,174.5 L335.6,177.0 L331.8,179.0 L328.3,181.7 L324.3,183.6 L320.0,186.0 L317.2,189.1 L315.0,192.0 L311.8,194.9 L309.0,198.0" fill="none" stroke="#fbfaf7" stroke-width="1.4" stroke-linejoin="round"/>
<path d="M376.0,132.0 L377.8,127.9 L378.0,124.6 L380.3,120.7 L381.3,116.9 L382.2,112.8 L383.2,108.4 L385.0,105.0 L388.9,102.7 L392.9,99.8 L397.0,98.0 L401.4,96.7 L405.0,95.1 L409.4,93.7 L413.1,93.2 L418.4,91.5 L422.0,90.0" fill="none" stroke="#fbfaf7" stroke-width="1.4" stroke-linejoin="round"/>
<path d="M297.0,105.0 L298.2,100.9 L298.8,96.7 L299.4,93.1 L300.3,88.5 L300.9,84.5 L301.3,81.5 L302.0,77.0 L304.9,73.7 L308.8,70.8 L312.0,68.5 L316.0,65.0" fill="none" stroke="#fbfaf7" stroke-width="1.4" stroke-linejoin="round"/>
<path d="M204.0,5.0 L209.0,5.3 L213.0,5.9 L217.3,5.6 L222.9,6.4 L227.0,7.0 L230.0,10.5 L233.6,13.0 L235.6,15.8 L239.0,19.0 L243.9,18.9 L247.4,18.2 L251.9,17.1 L256.1,17.0 L261.5,15.5 L265.4,14.9 L270.1,14.1 L274.0,14.0 L277.9,14.9 L282.5,15.7 L287.6,16.1 L291.1,16.7 L296.4,17.1 L299.7,17.4 L304.4,18.6 L309.0,19.0 L313.1,17.6 L317.5,17.2 L322.6,15.8 L326.9,15.5 L331.3,13.7 L335.3,13.5 L340.0,12.0" fill="none" stroke="#fbfaf7" stroke-width="1.4" stroke-linejoin="round"/>
<path d="M227.0,7.0 L227.8,11.3 L228.4,15.7 L229.4,20.7 L229.4,25.4 L230.0,30.0 L229.7,34.1 L230.1,37.7 L231.0,41.5 L230.5,46.3 L230.7,49.7 L231.3,53.6 L231.9,58.6 L231.0,62.0 L232.1,65.9 L232.0,70.0 L232.3,74.2 L231.3,78.4 L231.6,82.4 L231.5,87.1 L231.1,90.9 L231.3,95.3 L230.8,99.8 L230.2,103.8 L230.0,107.8 L229.9,111.7 L230.0,116.0" fill="none" stroke="#fbfaf7" stroke-width="1.4" stroke-linejoin="round"/>
<path d="M232.0,58.0 L236.8,59.6 L241.3,60.2 L245.5,61.4 L250.0,63.0 L252.8,66.3 L254.8,69.8 L258.3,73.1 L261.1,75.9 L262.9,79.1 L266.0,82.9 L268.6,86.0 L271.7,89.2 L274.0,93.0" fill="none" stroke="#fbfaf7" stroke-width="1.4" stroke-linejoin="round"/>
<path d="M283.0,167.0 L283.7,171.3 L283.5,175.7 L283.3,179.2 L283.6,183.3 L283.8,188.1 L284.2,191.9 L284.5,195.9 L285.0,200.2 L284.5,204.4 L285.0,209.0" fill="none" stroke="#fbfaf7" stroke-width="1.4" stroke-linejoin="round"/>
<path d="M367.0,163.0 L366.6,168.0 L366.1,171.7 L365.1,176.6 L364.3,182.0 L364.0,186.0 L362.2,190.1 L361.7,194.9 L359.7,198.4 L359.2,202.0 L357.3,207.2 L355.9,210.7 L355.0,215.0" fill="none" stroke="#fbfaf7" stroke-width="1.4" stroke-linejoin="round"/>
<path d="M306.0,338.0 L309.9,338.8 L313.7,339.2 L318.9,341.0 L322.7,341.3 L326.2,342.6 L330.3,343.4 L335.2,344.1 L338.6,345.8 L343.0,345.5 L347.0,347.0 L350.1,350.0 L352.8,352.5 L356.7,355.9 L359.8,358.8 L362.8,361.0 L366.0,364.0 L370.2,365.4 L374.0,366.7 L377.3,368.1 L381.4,369.6 L384.8,371.2 L389.0,373.0 L392.8,371.0 L396.5,370.0 L400.6,368.0 L403.8,365.7 L408.0,364.0 L411.0,361.7 L414.8,358.7 L417.9,356.1 L422.0,354.0" fill="none" stroke="#fbfaf7" stroke-width="1.4" stroke-linejoin="round"/>
<path d="M306.0,338.0 L305.7,341.9 L306.5,346.3 L305.7,349.8 L306.0,354.0 L301.0,359.0 L300.1,363.5 L299.8,367.3 L299.8,371.5 L299.0,375.0 L294.9,378.3 L292.0,382.0 L287.9,381.5 L284.5,381.8 L280.0,382.0 L279.7,386.7 L278.1,391.2 L278.0,396.0 L274.9,398.6 L272.0,402.5 L269.0,405.4 L266.7,408.9 L264.0,412.0 L261.3,416.2 L259.2,420.3 L257.4,423.6 L255.0,428.0 L253.4,432.5 L252.8,437.4 L251.1,442.7 L250.0,447.0" fill="none" stroke="#fbfaf7" stroke-width="1.4" stroke-linejoin="round"/>
<path d="M204.0,382.0 L208.3,383.4 L213.1,385.0 L218.0,387.0 L220.4,389.4 L224.2,393.1 L227.4,396.6 L229.8,399.2 L233.5,401.7 L236.2,405.2 L239.0,408.0 L242.5,411.8 L244.7,414.8 L247.5,417.9 L250.9,420.8 L253.9,424.5 L257.0,428.0 L260.2,430.5 L263.0,433.5 L266.6,436.0 L270.0,438.9 L273.0,442.0 L276.3,443.8 L280.5,445.6 L284.5,448.2 L288.3,450.2 L292.0,452.0 L294.4,454.5 L297.8,456.8 L300.9,459.5 L304.0,462.8 L307.0,465.1 L310.0,468.0 L309.4,471.9 L309.2,477.3 L309.2,481.0 L309.1,485.3 L308.5,490.3 L308.8,494.4 L308.0,499.0" fill="none" stroke="#fbfaf7" stroke-width="1.4" stroke-linejoin="round"/>
<path d="M306.0,354.0 L307.4,358.5 L308.9,362.2 L310.0,365.9 L311.0,369.7 L312.8,374.5 L313.6,378.5 L315.0,382.0 L315.1,386.2 L316.3,391.1 L317.0,396.0 L319.7,399.7 L322.2,402.0 L325.2,405.7 L328.0,408.1 L331.2,411.7 L334.0,415.0 L335.5,419.0 L337.8,423.1 L339.5,427.1 L341.6,431.6 L343.0,435.0 L339.8,438.8 L337.5,442.8 L334.0,447.0 L330.0,449.5 L325.7,452.1 L321.6,453.3 L317.0,456.0 L314.8,460.0 L312.4,463.8 L310.0,468.0" fill="none" stroke="#fbfaf7" stroke-width="1.4" stroke-linejoin="round"/>
<path d="M204.0,424.0 L208.3,424.3 L213.2,423.7 L217.5,423.8 L222.0,424.0 L227.0,424.0 L230.6,424.0 L234.5,424.7 L239.2,425.2 L242.9,426.6 L247.0,426.5 L251.4,427.9 L255.0,428.0" fill="none" stroke="#fbfaf7" stroke-width="1.4" stroke-linejoin="round"/>
<path d="M204.0,410.0 L208.1,408.7 L213.2,408.4 L217.7,407.3 L222.1,406.3 L227.0,405.0 L230.6,403.0 L235.0,401.7 L238.9,399.6 L242.2,397.9 L246.3,396.2 L250.0,394.0 L253.7,391.2 L256.5,389.5 L259.7,386.6 L262.7,384.8 L267.2,382.9 L270.0,380.0" fill="none" stroke="#fbfaf7" stroke-width="1.4" stroke-linejoin="round"/>
<path d="M250.0,329.0 L253.4,331.2 L257.6,333.2 L261.4,335.5 L265.9,336.5 L269.4,338.5 L273.0,341.0 L275.5,344.0 L279.3,348.1 L281.5,350.5 L285.0,354.0" fill="none" stroke="#fbfaf7" stroke-width="1.4" stroke-linejoin="round"/>
<path d="M269.0,308.0 L271.4,305.1 L275.0,301.8 L278.0,299.0 L273.8,297.6 L270.4,295.2 L265.9,293.9 L262.0,292.0" fill="none" stroke="#fbfaf7" stroke-width="1.4" stroke-linejoin="round"/>
<path d="M113.0,368.0 L110.7,372.9 L107.5,376.9 L105.0,381.0 L105.9,386.0 L106.2,389.8 L106.9,395.3 L107.9,399.4 L109.0,404.0 L107.5,408.5 L106.4,413.6 L105.6,418.4 L105.0,423.0 L106.7,426.4 L109.0,430.3 L110.7,433.7 L113.0,438.0 L113.9,442.3 L115.6,445.1 L116.8,449.4 L119.2,452.8 L120.0,457.0 L120.9,461.7 L120.9,466.9 L121.4,470.7 L122.0,476.0 L122.7,480.8 L123.3,484.9 L124.3,490.2 L125.0,494.3 L125.0,499.0" fill="none" stroke="#fbfaf7" stroke-width="1.4" stroke-linejoin="round"/>
<path d="M87.0,355.0 L91.9,356.8 L95.6,357.4 L100.1,359.0 L105.0,361.0 L108.2,362.6 L112.8,364.3 L116.3,365.7 L120.0,368.0" fill="none" stroke="#fbfaf7" stroke-width="1.4" stroke-linejoin="round"/>
<path d="M357.0,71.0 L357.9,75.5 L359.0,78.9 L361.2,83.1 L362.4,86.5 L363.7,90.9 L365.0,95.0 L365.4,98.9 L367.1,102.5 L368.2,106.7 L369.2,110.2 L371.0,114.0 L374.5,115.9 L378.4,118.2 L382.8,119.8 L386.4,121.8 L389.7,124.5 L393.6,125.5 L397.4,128.3 L401.1,130.3 L405.3,132.2 L409.0,134.0" fill="none" stroke="#fbfaf7" stroke-width="1.4" stroke-linejoin="round"/>
<path d="M300.0,74.0 L303.9,72.7 L308.2,72.2 L312.8,71.0 L317.2,70.7 L321.3,70.0 L326.3,68.8 L330.6,68.2 L334.7,67.1 L339.3,66.7 L343.0,66.0 L346.4,62.8 L348.5,60.4 L351.1,57.0 L354.5,54.9 L356.9,51.1 L359.7,49.1 L362.3,45.8 L365.4,42.9 L368.0,40.0 L371.6,37.3 L374.0,34.0 L377.9,32.0 L381.5,29.5 L385.5,28.2 L388.8,26.2 L392.5,23.9 L396.0,22.1 L400.0,20.0" fill="none" stroke="#fbfaf7" stroke-width="1.4" stroke-linejoin="round"/>
<path d="M0.0,200.0 L4.1,198.0 L7.4,196.2 L11.9,194.1 L16.1,192.5 L20.0,190.0 L23.3,191.8 L28.1,194.0 L31.0,195.9 L35.6,197.4 L39.2,198.9 L43.1,201.2 L45.9,203.5 L50.0,205.0" fill="none" stroke="#fbfaf7" stroke-width="1.4" stroke-linejoin="round"/>
<path d="M66.0,180.0 L70.2,179.7 L74.4,178.7 L78.0,178.1 L81.5,177.1 L86.3,175.5 L90.0,175.0 L92.4,178.9 L94.0,183.4 L95.6,186.7 L98.2,190.5 L100.0,195.0" fill="none" stroke="#fbfaf7" stroke-width="1.4" stroke-linejoin="round"/>
<path d="M0.0,300.0 L3.4,298.1 L6.7,295.2 L10.4,293.8 L13.7,291.2 L17.2,289.2 L19.6,286.5 L22.9,283.9 L26.5,282.7 L30.0,280.0 L34.7,280.3 L38.2,281.3 L43.3,282.3 L47.6,282.3 L52.0,283.2 L55.9,284.7 L60.0,285.0" fill="none" stroke="#fbfaf7" stroke-width="1.4" stroke-linejoin="round"/>
<path d="M385.0,180.0 L387.8,183.0 L390.2,186.6 L391.9,189.8 L394.8,193.5 L397.2,196.8 L400.0,200.0 L404.6,200.6 L408.4,202.2 L413.2,202.6 L417.1,204.5 L422.0,205.0" fill="none" stroke="#fbfaf7" stroke-width="1.4" stroke-linejoin="round"/>
<path d="M340.0,240.0 L344.4,238.4 L348.2,237.7 L353.1,236.0 L357.0,234.1 L361.3,232.4 L365.9,231.3 L370.0,230.0 L373.7,232.1 L376.6,234.5 L380.5,236.5 L383.6,238.6 L386.8,240.9 L390.4,243.1 L393.8,245.8 L396.6,248.3 L400.0,250.0 L404.3,249.9 L408.9,249.1 L412.7,248.7 L417.3,248.3 L422.0,248.0" fill="none" stroke="#fbfaf7" stroke-width="1.4" stroke-linejoin="round"/>
<path d="M200.0,30.0 L204.8,28.3 L208.8,27.3 L212.6,25.6 L216.7,24.8 L221.1,22.8 L225.5,21.8 L230.0,20.0 L232.4,16.1 L234.1,11.5 L236.5,7.5 L237.8,3.8 L240.0,0.0" fill="none" stroke="#fbfaf7" stroke-width="1.4" stroke-linejoin="round"/>
<path d="M0.0,120.0 L4.6,120.9 L8.4,121.9 L13.4,121.6 L17.3,122.8 L21.3,123.5 L25.5,124.5 L30.0,125.0 L33.1,122.6 L36.6,119.6 L38.9,116.4 L42.2,113.2 L45.0,110.0" fill="none" stroke="#fbfaf7" stroke-width="1.4" stroke-linejoin="round"/>
<path d="M80.0,30.0 L82.8,32.8 L84.4,36.5 L86.9,39.7 L89.5,43.0 L91.0,46.2 L93.2,50.3 L95.1,52.9 L98.0,56.8 L100.0,60.0 L99.6,64.0 L98.9,68.8 L98.2,72.4 L97.1,76.6 L96.9,82.0 L96.2,85.1 L95.0,90.0" fill="none" stroke="#fbfaf7" stroke-width="1.4" stroke-linejoin="round"/>
<path d="M179.0,377.0 L181.7,379.9 L184.8,382.2 L187.9,385.3 L190.4,388.0 L193.4,390.8 L195.6,394.2 L199.0,397.0 L202.9,399.0 L207.0,400.2 L211.0,401.7 L215.6,403.7 L219.8,405.8 L224.0,407.0 L226.9,409.6 L230.3,412.0 L234.0,413.6 L237.5,416.3 L241.2,418.0 L243.4,419.9 L247.7,422.8 L250.9,424.4 L254.0,427.0 L256.9,429.3 L259.2,432.5 L263.1,435.7 L265.8,437.9 L268.2,440.8 L270.9,443.7 L274.0,447.0 L278.1,448.9 L281.1,451.5 L285.2,454.0 L288.4,455.6 L292.3,457.6 L295.2,460.1 L299.0,462.0" fill="none" stroke="#fbfaf7" stroke-width="1.4" stroke-linejoin="round"/>
<path d="M194.0,372.0 L198.0,372.6 L202.5,373.4 L206.7,374.1 L211.1,374.3 L215.8,375.0 L219.7,376.3 L224.0,377.0 L227.6,378.5 L231.0,380.6 L235.0,382.6 L238.7,384.8 L242.7,385.8 L246.4,388.8 L249.7,390.2 L254.0,392.0 L258.8,392.6 L262.7,393.3 L266.6,394.3 L271.3,394.6 L275.4,395.6 L280.0,395.7 L284.0,397.0 L287.7,395.0 L292.1,394.0 L296.4,392.4 L300.5,390.1 L305.0,388.2 L309.0,387.0" fill="none" stroke="#fbfaf7" stroke-width="1.4" stroke-linejoin="round"/>
<path d="M224.0,357.0 L227.1,360.7 L228.8,363.4 L231.9,367.3 L234.2,369.8 L236.8,373.1 L239.0,377.0 L239.9,381.3 L240.9,385.7 L240.6,390.4 L242.2,394.2 L242.0,398.7 L243.2,402.9 L244.0,407.0 L243.2,411.8 L240.6,415.9 L239.6,420.2 L238.1,424.1 L236.8,428.0 L235.2,433.0 L234.0,437.0 L231.8,440.7 L231.1,445.5 L229.1,449.0 L226.9,453.4 L226.2,457.9 L224.0,462.0" fill="none" stroke="#fbfaf7" stroke-width="1.4" stroke-linejoin="round"/>
<path d="M249.0,342.0 L253.1,343.8 L256.0,346.3 L260.1,348.0 L263.7,350.5 L266.3,352.6 L270.3,355.1 L274.0,357.0 L278.7,358.7 L282.6,360.2 L286.8,361.5 L291.0,363.3 L294.9,365.0 L299.0,367.0 L303.0,364.9 L307.2,363.8 L311.5,361.9 L315.8,360.7 L319.7,358.8 L324.0,357.0" fill="none" stroke="#fbfaf7" stroke-width="1.4" stroke-linejoin="round"/>
<path d="M204.0,392.0 L202.3,396.7 L200.5,400.6 L198.7,404.2 L197.6,408.8 L195.4,412.3 L194.0,417.0 L192.4,420.9 L190.3,424.9 L188.1,429.1 L186.6,433.5 L184.0,437.0" fill="none" stroke="#fbfaf7" stroke-width="1.4" stroke-linejoin="round"/>
<path d="M324.0,367.0 L326.1,370.6 L328.0,374.4 L330.0,377.5 L333.0,380.7 L335.0,384.9 L336.9,388.2 L339.0,392.0 L339.2,396.9 L340.6,401.1 L340.4,405.5 L341.2,409.1 L342.2,414.0 L342.3,418.6 L343.5,423.1 L344.0,427.0 L342.3,430.6 L339.4,434.2 L337.6,436.7 L335.5,440.6 L332.6,443.4 L330.1,447.0 L328.1,450.1 L325.9,453.2 L324.0,457.0" fill="none" stroke="#fbfaf7" stroke-width="1.4" stroke-linejoin="round"/>
<path d="M300.0,290.0 L303.3,287.2 L306.4,284.7 L310.0,282.9 L312.9,280.4 L317.1,277.6 L320.0,275.0 L324.2,274.4 L328.4,273.5 L333.0,272.8 L336.4,271.1 L341.4,270.7 L345.0,270.0 L348.5,272.2 L351.2,274.8 L354.7,278.0 L357.5,280.1 L360.4,282.2 L364.3,284.5 L367.4,287.7 L370.0,290.0 L370.9,294.8 L372.4,298.6 L373.8,303.4 L375.5,307.6 L376.6,311.6 L378.1,315.1 L380.0,320.0" fill="none" stroke="#fbfaf7" stroke-width="1.4" stroke-linejoin="round"/>
<path d="M240.0,290.0 L244.1,292.6 L248.2,294.4 L252.3,296.0 L255.5,298.0 L260.0,300.0 L262.5,302.9 L265.5,305.7 L268.2,308.8 L271.3,311.4 L273.8,314.3 L277.2,317.7 L280.0,320.0" fill="none" stroke="#fbfaf7" stroke-width="1.4" stroke-linejoin="round"/>
<path d="M204.4,84.3 L199.5,84.2 L198.5,87.3" fill="none" stroke="#f9f7f3" stroke-width="0.9" opacity="0.8"/>
<path d="M250.2,31.6 L258.1,29.4 L260.2,34.7" fill="none" stroke="#f9f7f3" stroke-width="0.9" opacity="0.8"/>
<path d="M243.7,43.6 L245.5,35.7 L241.9,26.1" fill="none" stroke="#f9f7f3" stroke-width="0.9" opacity="0.8"/>
<path d="M240.5,25.6 L244.2,35.0 L248.7,35.6 L254.0,44.4" fill="none" stroke="#f9f7f3" stroke-width="0.9" opacity="0.8"/>
<path d="M233.7,49.2 L228.1,48.4 L223.9,38.8 L230.6,39.9 L233.5,33.7" fill="none" stroke="#f9f7f3" stroke-width="0.9" opacity="0.8"/>
<path d="M264.5,85.2 L269.3,93.1 L278.8,93.1" fill="none" stroke="#f9f7f3" stroke-width="0.9" opacity="0.8"/>
<path d="M262.7,60.5 L256.5,56.2 L266.0,56.2 L274.8,54.1 L281.9,53.7" fill="none" stroke="#f9f7f3" stroke-width="0.9" opacity="0.8"/>
<path d="M247.1,53.3 L240.5,54.3 L244.6,57.8 L242.1,56.5 L242.2,62.1" fill="none" stroke="#f9f7f3" stroke-width="0.9" opacity="0.8"/>
<path d="M231.5,52.5 L236.1,51.9 L232.3,58.9 L234.6,60.4" fill="none" stroke="#f9f7f3" stroke-width="0.9" opacity="0.8"/>
<path d="M240.3,36.8 L249.9,42.2 L250.7,49.4" fill="none" stroke="#f9f7f3" stroke-width="0.9" opacity="0.8"/>
<path d="M211.3,61.0 L208.3,69.2 L211.5,71.3 L216.1,69.0 L223.2,78.1" fill="none" stroke="#f9f7f3" stroke-width="0.9" opacity="0.8"/>
<path d="M260.7,60.9 L261.1,62.1 L259.6,53.2" fill="none" stroke="#f9f7f3" stroke-width="0.9" opacity="0.8"/>
<path d="M255.9,64.9 L264.7,63.2 L271.0,61.5" fill="none" stroke="#f9f7f3" stroke-width="0.9" opacity="0.8"/>
<path d="M195.1,62.8 L191.7,64.8 L197.8,67.5 L198.8,61.1 L190.7,62.1" fill="none" stroke="#f9f7f3" stroke-width="0.9" opacity="0.8"/>
<path d="M254.6,90.2 L261.4,93.6 L253.1,84.0" fill="none" stroke="#f9f7f3" stroke-width="0.9" opacity="0.8"/>
<path d="M196.0,77.9 L191.4,83.8 L185.1,79.6" fill="none" stroke="#f9f7f3" stroke-width="0.9" opacity="0.8"/>
<path d="M206.7,42.9 L209.9,45.8 L205.7,49.9" fill="none" stroke="#f9f7f3" stroke-width="0.9" opacity="0.8"/>
<path d="M229.8,33.0 L227.5,31.4 L221.2,23.6 L229.2,23.8" fill="none" stroke="#f9f7f3" stroke-width="0.9" opacity="0.8"/>
<path d="M209.6,67.4 L204.1,65.3 L194.9,74.5" fill="none" stroke="#f9f7f3" stroke-width="0.9" opacity="0.8"/>
<path d="M226.2,60.4 L227.1,54.9 L236.6,60.8 L236.9,55.3" fill="none" stroke="#f9f7f3" stroke-width="0.9" opacity="0.8"/>
<path d="M240.4,52.6 L246.5,55.8 L245.0,60.6 L237.5,54.8 L228.5,46.2" fill="none" stroke="#f9f7f3" stroke-width="0.9" opacity="0.8"/>
<path d="M200.4,89.2 L205.2,87.5 L200.3,77.7 L207.8,68.5" fill="none" stroke="#f9f7f3" stroke-width="0.9" opacity="0.8"/>
<path d="M252.4,92.4 L251.6,98.9 L259.0,104.5 L261.4,95.3 L255.4,87.2" fill="none" stroke="#f9f7f3" stroke-width="0.9" opacity="0.8"/>
<path d="M235.1,87.8 L229.0,79.8 L232.3,75.8 L232.3,72.3 L239.8,80.3" fill="none" stroke="#f9f7f3" stroke-width="0.9" opacity="0.8"/>
<path d="M196.3,39.1 L202.5,40.3 L195.2,38.9 L190.5,30.8" fill="none" stroke="#f9f7f3" stroke-width="0.9" opacity="0.8"/>
<path d="M221.5,63.3 L222.2,68.7 L222.9,60.0 L213.7,52.7 L207.0,53.4" fill="none" stroke="#f9f7f3" stroke-width="0.9" opacity="0.8"/>
<path d="M213.8,48.3 L220.6,45.6 L217.4,41.4 L224.7,43.5 L233.8,51.3" fill="none" stroke="#f9f7f3" stroke-width="0.9" opacity="0.8"/>
<path d="M204.5,63.6 L200.9,61.7 L198.5,71.5" fill="none" stroke="#f9f7f3" stroke-width="0.9" opacity="0.8"/>
<path d="M319.2,348.7 L311.0,345.9 L304.4,352.1" fill="none" stroke="#f9f7f3" stroke-width="0.9" opacity="0.8"/>
<path d="M312.6,304.1 L314.8,305.7 L307.9,304.3" fill="none" stroke="#f9f7f3" stroke-width="0.9" opacity="0.8"/>
<path d="M283.2,334.3 L292.2,335.2 L291.1,330.5 L281.8,321.1 L281.1,317.4" fill="none" stroke="#f9f7f3" stroke-width="0.9" opacity="0.8"/>
<path d="M282.3,345.1 L275.6,338.6 L270.2,332.2 L263.7,332.4 L260.9,332.6" fill="none" stroke="#f9f7f3" stroke-width="0.9" opacity="0.8"/>
<path d="M293.8,351.7 L299.8,356.4 L307.9,361.6 L313.7,358.7" fill="none" stroke="#f9f7f3" stroke-width="0.9" opacity="0.8"/>
<path d="M320.8,349.6 L329.9,347.6 L334.7,350.7" fill="none" stroke="#f9f7f3" stroke-width="0.9" opacity="0.8"/>
<path d="M274.0,305.9 L274.0,312.5 L271.1,320.2 L279.1,319.4" fill="none" stroke="#f9f7f3" stroke-width="0.9" opacity="0.8"/>
<path d="M294.3,346.9 L293.5,350.1 L302.3,356.4 L309.0,363.9 L311.3,369.4" fill="none" stroke="#f9f7f3" stroke-width="0.9" opacity="0.8"/>
<path d="M288.7,307.4 L295.3,308.7 L295.5,311.0 L293.6,315.6 L293.4,312.9" fill="none" stroke="#f9f7f3" stroke-width="0.9" opacity="0.8"/>
<path d="M301.8,344.5 L306.3,352.6 L300.1,357.5 L291.3,360.6" fill="none" stroke="#f9f7f3" stroke-width="0.9" opacity="0.8"/>
<path d="M275.5,302.5 L280.6,295.2 L275.9,301.7" fill="none" stroke="#f9f7f3" stroke-width="0.9" opacity="0.8"/>
<path d="M318.4,291.9 L323.6,283.0 L320.8,278.0 L311.3,270.3 L302.6,261.1" fill="none" stroke="#f9f7f3" stroke-width="0.9" opacity="0.8"/>
<path d="M316.8,311.9 L323.1,305.0 L316.7,308.9" fill="none" stroke="#f9f7f3" stroke-width="0.9" opacity="0.8"/>
<path d="M282.7,290.8 L275.7,281.5 L272.6,283.8" fill="none" stroke="#f9f7f3" stroke-width="0.9" opacity="0.8"/>
<path d="M305.5,295.2 L305.3,291.4 L306.3,293.5 L297.2,288.8" fill="none" stroke="#f9f7f3" stroke-width="0.9" opacity="0.8"/>
<path d="M283.7,327.8 L283.2,322.3 L286.4,318.6" fill="none" stroke="#f9f7f3" stroke-width="0.9" opacity="0.8"/>
<path d="M264.5,316.7 L264.9,322.3 L264.6,318.8" fill="none" stroke="#f9f7f3" stroke-width="0.9" opacity="0.8"/>
<path d="M314.0,309.8 L316.1,308.2 L306.4,309.4 L299.3,300.5" fill="none" stroke="#f9f7f3" stroke-width="0.9" opacity="0.8"/>
<path d="M260.1,298.3 L259.2,292.9 L267.5,297.1" fill="none" stroke="#f9f7f3" stroke-width="0.9" opacity="0.8"/>
<path d="M260.0,303.8 L258.9,298.8 L260.7,301.3 L266.7,305.5 L261.9,303.9" fill="none" stroke="#f9f7f3" stroke-width="0.9" opacity="0.8"/>
<path d="M291.7,288.3 L289.4,281.5 L289.6,273.3" fill="none" stroke="#f9f7f3" stroke-width="0.9" opacity="0.8"/>
<path d="M264.5,289.3 L256.6,279.8 L260.0,278.8" fill="none" stroke="#f9f7f3" stroke-width="0.9" opacity="0.8"/>
<path d="M292.3,312.3 L300.4,321.6 L305.0,320.3 L305.2,321.9 L296.2,320.2" fill="none" stroke="#f9f7f3" stroke-width="0.9" opacity="0.8"/>
<path d="M291.6,299.6 L294.9,299.2 L285.3,308.4" fill="none" stroke="#f9f7f3" stroke-width="0.9" opacity="0.8"/>
<path d="M265.6,311.5 L275.3,308.9 L265.6,312.6 L257.7,308.7 L264.5,312.2" fill="none" stroke="#f9f7f3" stroke-width="0.9" opacity="0.8"/>
<path d="M259.0,316.9 L261.8,316.2 L269.5,318.4 L259.6,308.9" fill="none" stroke="#f9f7f3" stroke-width="0.9" opacity="0.8"/>
<path d="M277.6,334.3 L282.7,328.2 L284.1,326.0" fill="none" stroke="#f9f7f3" stroke-width="0.9" opacity="0.8"/>
<path d="M287.6,336.2 L295.4,331.3 L287.9,333.6 L284.5,331.5" fill="none" stroke="#f9f7f3" stroke-width="0.9" opacity="0.8"/>
<path d="M234.3,392.7 L242.6,392.1 L244.2,394.2 L252.4,393.6" fill="none" stroke="#f9f7f3" stroke-width="0.9" opacity="0.8"/>
<path d="M253.0,371.5 L252.5,378.2 L252.0,381.0 L245.0,383.7 L252.4,384.2" fill="none" stroke="#f9f7f3" stroke-width="0.9" opacity="0.8"/>
<path d="M264.5,400.3 L257.7,409.4 L248.5,415.0" fill="none" stroke="#f9f7f3" stroke-width="0.9" opacity="0.8"/>
<path d="M269.4,376.2 L273.8,383.7 L278.1,392.2 L276.0,398.2 L274.9,406.9" fill="none" stroke="#f9f7f3" stroke-width="0.9" opacity="0.8"/>
<path d="M272.7,365.8 L272.6,361.0 L276.1,366.6" fill="none" stroke="#f9f7f3" stroke-width="0.9" opacity="0.8"/>
<path d="M271.3,385.3 L272.8,386.0 L270.9,380.6 L267.7,388.9" fill="none" stroke="#f9f7f3" stroke-width="0.9" opacity="0.8"/>
<path d="M221.7,376.8 L225.1,370.0 L232.4,379.3 L240.5,380.7 L244.7,374.9" fill="none" stroke="#f9f7f3" stroke-width="0.9" opacity="0.8"/>
<path d="M269.9,394.4 L262.4,394.1 L265.2,393.7 L262.0,385.1" fill="none" stroke="#f9f7f3" stroke-width="0.9" opacity="0.8"/>
<path d="M273.8,361.2 L279.2,368.7 L270.1,371.0 L261.0,375.3" fill="none" stroke="#f9f7f3" stroke-width="0.9" opacity="0.8"/>
<path d="M239.9,412.9 L240.0,422.8 L236.2,414.4 L238.2,405.0" fill="none" stroke="#f9f7f3" stroke-width="0.9" opacity="0.8"/>
<path d="M231.8,384.5 L227.1,388.3 L236.7,385.1 L233.9,377.8 L241.1,375.4" fill="none" stroke="#f9f7f3" stroke-width="0.9" opacity="0.8"/>
<path d="M272.2,383.2 L275.8,375.2 L285.3,381.5 L280.7,384.1 L285.0,392.9" fill="none" stroke="#f9f7f3" stroke-width="0.9" opacity="0.8"/>
<path d="M246.2,375.5 L247.2,365.7 L245.5,367.3 L235.9,369.6" fill="none" stroke="#f9f7f3" stroke-width="0.9" opacity="0.8"/>
<path d="M257.9,363.6 L254.6,360.7 L262.9,362.8 L258.5,362.6 L260.3,371.7" fill="none" stroke="#f9f7f3" stroke-width="0.9" opacity="0.8"/>
<path d="M221.3,382.1 L220.4,384.0 L216.8,381.3 L213.1,378.7 L215.0,374.7" fill="none" stroke="#f9f7f3" stroke-width="0.9" opacity="0.8"/>
<path d="M242.6,406.3 L252.1,410.0 L244.7,410.0" fill="none" stroke="#f9f7f3" stroke-width="0.9" opacity="0.8"/>
<path d="M326.8,230.2 L326.4,222.0 L316.8,222.9 L312.6,232.7" fill="none" stroke="#f9f7f3" stroke-width="0.9" opacity="0.8"/>
<path d="M317.9,251.0 L313.5,244.5 L305.6,238.8 L314.1,245.3" fill="none" stroke="#f9f7f3" stroke-width="0.9" opacity="0.8"/>
<path d="M355.3,265.0 L348.6,260.8 L356.0,270.0" fill="none" stroke="#f9f7f3" stroke-width="0.9" opacity="0.8"/>
<path d="M357.4,243.6 L354.2,241.4 L349.2,236.3 L344.8,245.2 L351.1,254.1" fill="none" stroke="#f9f7f3" stroke-width="0.9" opacity="0.8"/>
<path d="M357.0,225.4 L358.5,233.0 L365.4,233.2 L363.7,235.2" fill="none" stroke="#f9f7f3" stroke-width="0.9" opacity="0.8"/>
<path d="M336.6,233.1 L331.7,239.0 L323.4,238.3 L333.3,238.6" fill="none" stroke="#f9f7f3" stroke-width="0.9" opacity="0.8"/>
<path d="M347.4,260.0 L357.3,254.0 L355.6,248.0" fill="none" stroke="#f9f7f3" stroke-width="0.9" opacity="0.8"/>
<path d="M346.6,238.8 L345.4,240.6 L348.0,234.6 L344.5,241.4" fill="none" stroke="#f9f7f3" stroke-width="0.9" opacity="0.8"/>
<path d="M350.4,238.9 L352.7,233.6 L349.3,227.2 L348.5,218.0 L352.5,225.9" fill="none" stroke="#f9f7f3" stroke-width="0.9" opacity="0.8"/>
<path d="M362.7,261.7 L353.1,257.5 L362.4,263.0 L360.6,271.9" fill="none" stroke="#f9f7f3" stroke-width="0.9" opacity="0.8"/>
<path d="M219.4,148.7 L228.3,153.5 L236.7,144.1 L236.0,152.9 L239.0,161.0" fill="none" stroke="#f9f7f3" stroke-width="0.9" opacity="0.8"/>
<path d="M201.1,138.9 L198.7,130.9 L193.7,135.5" fill="none" stroke="#f9f7f3" stroke-width="0.9" opacity="0.8"/>
<path d="M211.7,128.6 L204.9,134.5 L197.7,136.8 L190.2,126.9" fill="none" stroke="#f9f7f3" stroke-width="0.9" opacity="0.8"/>
<path d="M228.4,129.5 L237.6,122.9 L230.9,119.1" fill="none" stroke="#f9f7f3" stroke-width="0.9" opacity="0.8"/>
<path d="M204.2,153.5 L198.3,162.4 L202.1,171.7 L209.9,167.7 L207.2,161.0" fill="none" stroke="#f9f7f3" stroke-width="0.9" opacity="0.8"/>
<path d="M202.2,124.3 L208.6,126.1 L210.5,130.2 L201.8,127.3" fill="none" stroke="#f9f7f3" stroke-width="0.9" opacity="0.8"/>
<path d="M208.0,147.1 L207.6,151.2 L198.8,160.7" fill="none" stroke="#f9f7f3" stroke-width="0.9" opacity="0.8"/>
<path d="M197.8,149.0 L188.2,154.7 L185.5,156.3 L175.7,147.3" fill="none" stroke="#f9f7f3" stroke-width="0.9" opacity="0.8"/>
<path d="M203.5,156.4 L195.9,151.3 L202.3,150.6" fill="none" stroke="#f9f7f3" stroke-width="0.9" opacity="0.8"/>
<path d="M215.4,154.1 L221.0,146.3 L225.9,152.2 L233.1,143.0" fill="none" stroke="#f9f7f3" stroke-width="0.9" opacity="0.8"/>
<path d="M81.0,0.0 L80.1,3.2 L78.7,7.1 L78.0,11.0 L73.0,13.0" fill="none" stroke="#9fd1ee" stroke-width="1.2" stroke-linejoin="round"/>
<path d="M32.0,58.0 L33.5,61.6 L35.1,64.6 L36.2,67.5 L37.4,69.3 L38.0,73.0 L41.0,73.8 L44.3,74.4 L47.2,75.5 L49.4,75.5 L53.6,75.5 L55.5,77.3 L59.6,76.7 L62.0,78.0 L61.3,81.6 L62.3,84.3 L62.1,87.8 L62.4,89.9 L61.4,94.1 L62.7,97.3 L62.0,100.0 L65.1,101.4 L68.2,102.5 L72.0,104.5 L74.9,106.4 L78.0,108.0 L80.2,110.5 L82.8,112.2 L85.8,114.4 L87.2,116.8 L90.1,119.8 L92.3,121.3 L95.0,124.0 L96.2,126.8 L97.0,130.0 L98.5,133.1 L98.6,136.4 L99.8,140.2 L101.0,143.0 L98.8,145.6 L96.3,146.8 L94.2,149.2 L91.0,151.7 L89.0,154.0 L90.7,157.0 L90.8,160.9 L92.7,163.3 L92.5,167.1 L94.4,169.6 L95.0,173.0 L95.0,176.0 L93.8,179.4 L94.1,182.4 L93.7,184.9 L92.9,188.5 L91.8,192.4 L92.0,195.0 L93.3,197.1 L96.0,200.6 L97.9,202.3 L99.6,204.5 L101.1,208.1 L102.1,209.5 L104.5,213.0 L106.0,215.0 L108.5,217.8 L110.2,219.1 L111.9,221.1 L115.2,223.0 L116.3,225.5 L118.2,227.6 L121.0,230.0" fill="none" stroke="#9fd1ee" stroke-width="1.2" stroke-linejoin="round"/>
<path d="M92.0,185.0 L91.6,188.1 L92.0,192.4 L92.0,196.0 L95.1,197.8 L98.0,199.5 L100.4,199.9 L103.4,201.4 L107.4,203.7 L110.0,204.1 L113.0,206.0 L115.0,208.5 L117.3,211.3 L120.5,213.2 L122.3,216.2 L124.4,217.7 L127.3,221.2 L129.0,223.0 L131.5,223.5 L135.1,222.7 L138.0,223.0 L141.9,223.2 L144.0,223.3 L148.3,223.9 L151.0,224.0" fill="none" stroke="#9fd1ee" stroke-width="1.2" stroke-linejoin="round"/>
<path d="M197.0,123.0 L197.8,126.4 L197.8,129.1 L198.5,132.6 L199.1,136.8 L200.0,140.0 L198.6,142.8 L197.8,145.3 L196.2,148.9 L195.3,151.1 L194.0,154.0 L190.8,154.8 L187.2,156.3 L183.8,157.2 L181.4,158.0 L177.1,158.3 L175.0,158.8 L171.0,160.0" fill="none" stroke="#9fd1ee" stroke-width="1.2" stroke-linejoin="round"/>
<path d="M297.0,35.0 L297.4,38.3 L298.3,41.1 L299.0,44.6 L300.0,46.4 L301.4,49.8 L302.0,53.0 L305.1,54.2 L308.6,55.4 L310.8,55.8 L314.0,57.3 L317.1,59.0 L320.0,60.0 L322.7,60.8 L325.6,62.8 L328.6,64.9 L330.9,65.5 L334.0,67.0 L335.5,65.1 L337.9,62.8 L340.8,59.7 L343.0,57.7 L344.5,55.4 L347.3,53.0 L348.8,50.4 L351.4,48.3 L353.0,46.0 L356.3,44.6 L359.6,44.5 L363.9,43.7 L367.0,42.0 L370.4,40.9 L373.0,39.5 L375.8,38.2 L377.7,36.8 L381.0,35.0" fill="none" stroke="#9fd1ee" stroke-width="1.2" stroke-linejoin="round"/>
<path d="M239.0,81.0 L242.4,80.0 L246.9,79.0 L250.0,79.0 L252.8,77.0 L256.0,75.6 L259.0,74.2 L261.4,71.2 L264.0,70.0" fill="none" stroke="#9fd1ee" stroke-width="1.2" stroke-linejoin="round"/>
<path d="M367.0,167.0 L367.9,169.6 L369.0,173.9 L368.7,176.1 L369.9,180.0 L371.0,183.0 L371.0,186.0 L370.0,189.5 L369.5,193.0 L370.0,196.1 L369.7,199.0 L369.4,202.3 L368.3,205.2 L367.7,207.9 L367.0,212.2 L367.0,215.0" fill="none" stroke="#9fd1ee" stroke-width="1.2" stroke-linejoin="round"/>
<path d="M68.0,343.0 L70.9,343.0 L74.9,342.8 L77.8,342.0 L81.0,342.0 L83.7,339.6 L87.2,338.3 L90.0,336.0" fill="none" stroke="#9fd1ee" stroke-width="1.2" stroke-linejoin="round"/>
<path d="M70.0,379.0 L74.0,378.2 L77.4,378.4 L79.9,377.8 L83.8,377.2 L87.0,376.0 L91.1,377.1 L94.0,378.7 L98.0,380.0 L101.0,380.7 L104.5,382.8 L107.0,384.5 L109.6,385.2 L113.0,387.0" fill="none" stroke="#9fd1ee" stroke-width="1.2" stroke-linejoin="round"/>
<path d="M0.0,421.0 L2.8,419.1 L5.2,417.3 L7.5,416.1 L10.9,415.3 L13.8,413.0 L16.2,411.2 L19.0,410.0 L22.1,410.0 L24.8,408.6 L28.8,408.4 L31.7,407.5 L35.4,407.2 L38.0,406.0 L41.1,405.3 L45.5,404.4 L47.8,404.0 L51.0,402.3 L55.0,402.0 L58.4,402.7 L62.0,404.3 L64.7,405.4 L68.5,406.3 L71.6,406.9 L75.0,408.0 L77.2,409.5 L81.1,411.7 L82.5,412.1 L85.5,414.6 L88.5,415.3 L91.2,417.5 L94.0,419.0 L97.6,418.9 L100.8,419.3 L104.0,418.4 L107.4,418.5 L109.8,419.0 L113.0,418.4 L117.0,419.0" fill="none" stroke="#9fd1ee" stroke-width="1.2" stroke-linejoin="round"/>
<path d="M6.0,460.0 L9.0,459.0 L11.7,458.6 L15.9,457.0 L18.7,455.7 L22.4,454.5 L24.6,453.6 L28.0,453.0 L31.5,453.3 L33.9,453.4 L37.5,453.5 L40.4,454.4 L42.9,454.2 L45.9,454.6 L49.0,455.0 L52.0,456.4 L55.4,457.2 L59.1,458.7 L62.0,460.0 L64.8,461.9 L67.6,462.5 L71.1,464.7 L73.7,465.2 L76.4,467.0 L79.0,468.0 L81.7,469.2 L85.6,469.9 L88.2,470.5 L91.2,471.0 L94.4,472.3 L97.7,472.9 L100.0,474.0" fill="none" stroke="#9fd1ee" stroke-width="1.2" stroke-linejoin="round"/>
<path d="M358.0,263.0 L355.7,260.5 L352.7,259.7 L349.9,257.6 L347.3,255.4 L345.8,253.3 L343.1,251.2 L340.0,250.0 L336.8,250.1 L333.8,249.2 L330.1,249.3 L327.0,249.0 L323.4,248.0 L320.0,248.0" fill="none" stroke="#9fd1ee" stroke-width="1.2" stroke-linejoin="round"/>
<path d="M390.0,250.0 L391.3,247.1 L392.1,244.7 L392.5,241.4 L393.8,238.3 L395.6,234.7 L396.1,232.0 L397.0,228.5 L398.2,226.6 L399.2,222.7 L400.0,220.0 L399.9,216.9 L398.5,214.1 L398.4,211.0 L398.7,208.1 L398.1,204.8 L397.4,201.4 L396.2,199.3 L396.3,196.5 L395.3,192.7 L395.0,190.0" fill="none" stroke="#9fd1ee" stroke-width="1.2" stroke-linejoin="round"/>
<path d="M150.0,80.0 L151.9,82.2 L153.6,84.1 L156.6,85.9 L158.3,89.1 L161.3,90.4 L162.4,92.3 L165.0,95.0 L166.1,97.9 L168.7,99.7 L170.0,102.8 L171.0,105.4 L173.8,107.1 L175.0,110.0" fill="none" stroke="#9fd1ee" stroke-width="1.2" stroke-linejoin="round"/>
<path d="M158.0,81.0 L160.5,83.9 L162.1,86.9 L164.1,89.0 L166.4,91.6 L169.3,94.4 L171.0,97.0 L174.0,99.5 L176.3,100.3 L179.7,102.1 L183.1,104.2 L185.2,106.2 L188.6,108.7 L191.0,110.0 L194.9,110.5 L198.1,112.3 L202.0,113.0" fill="none" stroke="#9fd1ee" stroke-width="1.2" stroke-linejoin="round"/>
<path d="M172.0,81.0 L172.9,84.7 L175.2,87.0 L175.8,90.1 L177.6,93.0 L178.9,96.2 L180.0,100.0" fill="none" stroke="#9fd1ee" stroke-width="1.2" stroke-linejoin="round"/>
<path d="M187.0,75.0 L188.3,78.1 L188.7,80.4 L188.7,83.8 L190.8,87.1 L191.4,89.4 L191.1,92.3 L192.7,95.5 L192.9,99.2 L194.0,102.0 L197.3,101.8 L200.0,101.7 L203.1,101.8 L205.8,101.6 L208.7,101.7 L211.3,101.7 L215.1,101.7 L218.0,102.0" fill="none" stroke="#9fd1ee" stroke-width="1.2" stroke-linejoin="round"/>
<path d="M234.0,91.0 L236.5,89.8 L240.0,87.7 L242.7,86.5 L246.4,84.5 L249.2,82.9 L252.0,81.0 L255.3,79.4 L258.3,78.0 L261.7,76.5 L265.0,75.0 L267.7,73.4 L270.9,70.6 L272.3,68.7 L275.0,67.4 L278.5,64.7 L281.0,63.0 L282.2,60.3 L284.7,56.9 L286.1,53.7 L287.3,50.1 L289.0,47.0" fill="none" stroke="#9fd1ee" stroke-width="1.2" stroke-linejoin="round"/>
<path d="M262.0,44.0 L265.2,45.9 L269.0,47.3 L272.0,47.4 L274.3,50.0 L277.9,50.7 L281.0,52.0 L283.7,52.1 L287.0,51.9 L289.4,51.5 L292.3,49.9 L296.0,50.0 L299.0,51.4 L301.9,52.5 L306.2,53.5 L309.2,54.9 L312.0,56.0 L315.1,57.3 L317.9,60.1 L321.2,60.9 L324.0,63.0" fill="none" stroke="#9fd1ee" stroke-width="1.2" stroke-linejoin="round"/>
<path d="M0.0,214.0 L4.2,213.8 L8.3,213.6 L12.9,212.6 L17.0,213.0 L19.9,216.5 L23.1,218.9 L27.1,222.5 L30.0,226.0 L33.1,230.6 L35.0,235.0 L36.7,238.7 L39.2,242.4 L42.1,245.9 L44.0,249.0 L47.6,250.1 L52.9,252.0 L56.3,253.6 L61.0,256.0 L64.9,255.2 L70.4,254.1 L73.9,254.1 L78.2,253.0 L83.0,252.0 L87.0,250.8 L90.0,248.4 L94.3,247.0 L98.0,245.0 L101.7,242.8 L106.0,241.0 L110.5,239.3 L113.4,238.9 L117.7,236.4 L120.9,235.3 L124.9,234.8 L129.0,233.0 L133.7,232.5 L138.0,230.8 L142.0,229.7 L146.6,227.6 L151.0,227.0 L156.0,225.8 L161.0,224.4 L166.0,224.0 L168.8,226.7 L172.8,227.8 L176.0,230.1 L180.0,232.0" fill="none" stroke="#6ec5ec" stroke-width="6" stroke-linejoin="round"/>
<path d="M0.0,221.0 L5.6,221.6 L10.0,223.0 L15.0,224.0 L19.1,226.8 L22.1,229.1 L26.6,231.7 L30.0,235.0 L32.9,237.7 L34.4,241.8 L37.7,245.4 L39.9,249.0 L42.0,252.0 L46.3,253.6 L50.5,256.0 L53.5,258.1 L58.0,261.0 L62.3,263.0 L68.0,264.0 L72.8,261.8 L77.4,261.2 L83.0,259.0 L87.0,257.4 L90.0,254.1 L94.2,252.1 L97.8,249.9 L102.4,247.7 L106.0,246.0 L109.4,244.7 L113.5,242.8 L117.6,242.0 L121.2,240.6 L124.5,239.5 L129.0,238.0 L133.0,237.2 L137.1,237.3 L142.3,236.0 L146.7,236.2 L151.0,235.0 L155.2,235.1 L160.8,235.3 L165.5,236.3 L170.0,236.0" fill="none" stroke="#6ec5ec" stroke-width="3" stroke-linejoin="round"/>
<path d="M88.0,202.0 L106.0,215.0 L121.0,230.0" fill="none" stroke="#6ec5ec" stroke-width="1.5"/>
<path d="M150.0,237.0 L153.4,237.2 L158.0,238.4 L163.0,238.8 L167.3,238.5 L170.7,240.1 L175.0,240.0 L179.2,237.4 L183.3,236.4 L186.8,233.8 L190.0,232.0 L194.3,233.4 L199.0,233.5 L203.1,234.8 L207.2,234.9 L211.6,234.8 L215.0,236.0 L218.6,237.9 L221.9,239.9 L225.5,241.5 L229.6,242.7 L233.9,244.3 L237.4,247.1 L242.0,247.9 L245.0,250.0" fill="none" stroke="#6ec5ec" stroke-width="2.5"/>
<path d="M300.0,246.0 L304.1,247.6 L308.1,249.1 L312.4,249.9 L316.9,250.3 L320.6,251.6 L325.4,253.4 L330.0,255.0 L334.8,256.4 L337.3,257.6 L341.6,258.4 L346.4,260.1 L350.7,260.6 L353.7,261.7 L358.0,263.0 L361.4,265.4 L365.3,267.3 L368.4,269.5 L373.4,270.5 L376.5,272.5 L380.0,275.0" fill="none" stroke="#7fcbee" stroke-width="1.8"/>
<path d="M130.0,275.0 L132.9,274.4 L137.2,274.8 L142.2,274.2 L147.1,272.3 L150.0,273.0 L153.0,273.6 L157.9,277.3 L162.4,278.4 L166.0,280.0 L168.2,284.7 L167.7,290.3 L170.0,295.0 L167.5,299.4 L166.2,304.2 L166.0,310.0 L163.5,313.8 L162.1,317.7 L162.3,320.9 L160.0,325.0 L157.6,329.7 L157.5,334.4 L155.6,337.9 L154.0,342.0 L155.4,346.7 L156.1,350.0 L156.2,355.1 L156.0,359.0 L159.4,360.7 L162.9,364.1 L166.7,367.5 L170.0,369.3 L172.6,373.4 L177.0,376.0 L177.8,381.4 L178.5,383.9 L178.1,388.6 L179.3,392.5 L179.0,397.0 L175.7,400.0 L170.1,403.0 L166.0,406.0 L170.1,408.0 L173.7,407.4 L178.2,408.8 L182.8,408.4 L188.0,410.0 L191.5,412.6 L196.0,414.5 L199.0,417.0 L201.2,420.3 L205.3,423.6 L207.0,428.0 L207.0,432.9 L209.4,435.1 L209.7,440.9 L212.4,443.0 L213.0,448.0 L217.4,450.6 L220.9,454.9 L225.0,458.0 L228.4,459.5 L234.0,459.0 L237.4,455.9 L242.2,453.6 L244.1,452.6 L249.0,450.0 L252.9,449.0 L257.7,445.3 L261.0,444.0 L264.7,445.7 L270.4,446.5 L276.3,447.8 L280.0,450.0 L283.8,452.0 L288.0,457.1 L290.8,458.6 L294.0,462.0 L297.5,467.3 L300.7,469.6 L303.0,475.0 L303.5,478.1 L304.1,484.1 L305.4,486.4 L305.1,490.6 L304.7,495.6 L306.0,499.0 L302.5,498.6 L297.7,499.5 L294.3,498.9 L288.8,498.0 L284.8,499.8 L281.5,499.3 L277.1,498.7 L272.6,500.1 L269.6,498.1 L265.7,499.2 L261.4,499.6 L257.4,499.9 L254.2,498.8 L249.3,498.7 L244.7,498.7 L241.2,498.6 L236.4,499.8 L233.4,499.4 L229.4,498.7 L224.8,498.4 L220.0,498.0 L217.1,500.0 L211.8,498.7 L207.3,498.1 L204.5,499.9 L199.1,498.4 L196.6,498.3 L192.8,498.6 L187.8,498.3 L183.2,498.8 L179.1,499.5 L174.5,499.3 L172.3,498.6 L166.7,498.1 L162.4,499.7 L159.5,497.8 L155.1,499.2 L150.7,497.9 L146.9,498.6 L143.0,499.0 L141.5,494.7 L138.7,491.9 L135.0,487.0 L134.6,481.9 L134.5,477.6 L133.3,473.4 L131.6,470.0 L132.0,466.0 L132.2,462.8 L134.2,458.3 L135.0,453.0 L134.6,449.1 L132.0,444.0 L128.1,442.4 L124.2,441.4 L118.4,439.6 L115.0,438.0 L116.1,433.0 L118.2,428.5 L119.0,423.0 L120.4,419.4 L122.3,413.5 L121.9,409.2 L124.0,406.0 L121.2,402.6 L120.0,397.0 L119.3,392.9 L119.4,389.2 L118.7,385.7 L119.0,381.0 L120.1,377.3 L122.0,372.0 L123.3,366.8 L123.3,363.0 L124.6,359.0 L123.7,356.6 L125.1,352.4 L125.2,348.0 L126.0,344.0 L124.8,339.2 L124.4,334.9 L123.6,328.9 L124.0,325.0 L123.9,321.1 L125.4,315.8 L127.0,313.8 L126.1,308.2 L127.0,305.0 L128.0,301.9 L126.7,297.1 L128.5,293.3 L128.0,288.0 L128.0,282.8 L128.5,278.7 Z" fill="#6ec5ec"/>
<ellipse cx="42" cy="338" rx="4.5" ry="5" fill="#6ec5ec"/>
<ellipse cx="77" cy="451" rx="3.8" ry="5.5" fill="#6ec5ec"/>
<ellipse cx="368" cy="273" rx="5" ry="6" fill="#6ec5ec"/>
<ellipse cx="400" cy="330" rx="8" ry="6" fill="#6ec5ec"/>
<path d="M112.0,0.0 L135.0,13.5 L150.0,30.0 L177.0,60.0 L200.0,69.0 L223.0,81.0" fill="none" stroke="#e6bd4c" stroke-width="1.7" stroke-linejoin="round"/>
<path d="M229.0,29.0 L257.0,33.0 L275.0,25.0 L300.0,20.0 L314.0,17.0 L383.0,10.0 L422.0,14.0" fill="none" stroke="#e6bd4c" stroke-width="1.7" stroke-linejoin="round"/>
<path d="M0.0,131.0 L17.0,141.0 L63.0,141.0 L104.0,147.0" fill="none" stroke="#e6bd4c" stroke-width="1.7" stroke-linejoin="round"/>
<path d="M226.0,156.0 L257.0,177.0 L286.0,200.0 L297.0,211.0" fill="none" stroke="#e6bd4c" stroke-width="1.7" stroke-linejoin="round"/>
<path d="M322.0,285.0 L320.0,301.0 L308.0,315.0 L306.0,331.0" fill="none" stroke="#e6bd4c" stroke-width="1.7" stroke-linejoin="round"/>
<path d="M0.0,314.0 L50.0,309.0" fill="none" stroke="#e6bd4c" stroke-width="1.7" stroke-linejoin="round"/>
<path d="M100.0,367.0 L85.0,391.0 L77.0,397.0 L70.0,423.0 L68.0,447.0 L64.0,477.0 L60.0,499.0" fill="none" stroke="#e6bd4c" stroke-width="1.7" stroke-linejoin="round"/>
<path d="M229.0,29.0 L226.0,86.0 L217.0,120.0 L213.0,134.0 L209.0,151.0 L209.0,250.0" fill="none" stroke="#ef8d45" stroke-width="1.5" stroke-linejoin="round"/>
<path d="M371.0,231.0 L406.0,217.0 L422.0,211.0" fill="none" stroke="#ef8d45" stroke-width="1.5" stroke-linejoin="round"/>
<path d="M134.0,157.0 L169.0,186.0 L206.0,197.0" fill="none" stroke="#ef8d45" stroke-width="1.5" stroke-linejoin="round"/>
<g font-family="Liberation Sans">
<text x="-6" y="52" font-size="13" fill="#333">Mor</text>
<text x="172" y="57.9" font-size="14.1" font-weight="700" fill="#2b2b2b" stroke="#ece6dd" stroke-width="2.5" paint-order="stroke">Novo Hamburgo</text>
<text x="167" y="149.8" font-size="13.9" fill="#474747" stroke="#ece6dd" stroke-width="2" stroke-opacity="0.7" paint-order="stroke">Sapucaia do Sul</text>
<text x="181" y="222" font-size="14.2" fill="#3d3d3d">Canoas</text>
<text x="293" y="238.1" font-size="14.3" fill="#222">Gravataí</text>
<text x="239" y="277.7" font-size="15" fill="#2f2f2f">Alvorada</text>
<text x="124" y="301.5" font-size="18.3" fill="#1a1a1a">Porto Alegre</text>
<text x="276" y="336.9" font-size="14" font-weight="700" fill="#2b2b2b">Viamão</text>
<text x="92" y="358.6" font-size="13.7" fill="#444">Guaíba</text>
<text x="108" y="479" font-size="13" fill="#4a4a4a">Barra do</text>
<text x="111" y="493.7" font-size="12.6" fill="#4a4a4a">Ribeiro</text>
<text x="165" y="449" font-size="10.6" font-style="italic" fill="#4b78bd">Guaíba Lake</text>
</g>
<g font-family="Liberation Sans" font-weight="700" text-anchor="middle">
<path d="M211,241 H235 V255 L223,259 L211,255 Z" fill="#f4f0ea" stroke="#333" stroke-width="1"/>
<text x="223" y="253" font-size="9" fill="#333">290</text>
<path d="M272.5,426.5 L286.5,433.5 L282.5,444 H262.5 L258.5,433.5 Z" fill="#fff" stroke="#333" stroke-width="1.2"/>
<text x="272.5" y="441" font-size="9" fill="#333">118</text>
<path d="M390,371 L404,378.5 L400.5,388.5 H379.5 L376,378.5 Z" fill="#fff" stroke="#333" stroke-width="1.2"/>
<text x="390" y="385.5" font-size="8.5" fill="#333">40A</text>
<path d="M48,478 H74 V494 L61,499 L48,494 Z" fill="#fff" stroke="#333" stroke-width="1"/>
<text x="61" y="490" font-size="8.5" fill="#333">116</text>
<path d="M410,206 H424 V224 H410 Z" fill="#fff" stroke="#333" stroke-width="1"/>
<text x="420" y="218" font-size="8" fill="#333">29</text>
</g>
<path d="M104.0,147.0 L108.1,147.4 L110.4,145.2 L113.4,144.9 L117.0,145.0 L120.3,147.0 L118.4,149.0 L125.9,149.4 L129.0,151.0 L128.5,150.0 L135.4,148.5 L137.6,146.6 L141.7,148.3 L142.9,146.0 L146.1,148.7 L149.9,148.2 L151.6,149.4 L161.3,150.7 L160.0,149.0 L163.7,150.3 L165.6,153.4 L169.0,156.0 L169.3,158.5 L170.5,163.4 L171.0,166.0 L174.7,163.8 L179.0,163.0 L180.8,160.4 L184.8,159.4 L187.4,159.1 L188.6,156.3 L191.7,156.1 L195.3,153.6 L198.9,154.3 L200.0,151.0 L202.1,149.4 L202.3,144.1 L207.5,144.6 L209.8,143.2 L211.0,140.0 L211.3,138.1 L212.3,134.7 L213.2,130.6 L217.4,128.3 L216.0,125.0 L217.0,127.3 L218.9,128.3 L217.8,133.0 L220.8,137.4 L219.0,140.0 L220.4,138.9 L222.0,147.1 L222.3,149.0 L225.1,152.4 L226.0,156.0 L227.4,157.5 L229.0,155.9 L232.1,163.3 L236.6,165.1 L230.1,167.0 L226.0,169.0 L221.9,171.1 L219.6,172.3 L217.0,174.0 L219.0,175.7 L220.5,178.1 L223.3,179.9 L228.6,184.4 L228.3,183.5 L231.6,184.8 L240.9,186.0 L239.4,184.0 L241.8,186.1 L246.0,186.0 L245.7,189.1 L244.9,192.8 L244.9,196.0 L245.2,199.4 L246.9,200.7 L243.7,204.8 L243.5,207.9 L242.4,205.7 L246.5,210.0 L247.7,207.9 L249.1,206.9 L255.2,202.7 L257.1,201.6 L260.0,200.0 L263.8,201.5 L265.7,203.6 L269.0,206.6 L271.7,208.4 L274.0,211.0 L278.0,210.1 L279.8,211.9 L284.4,212.2 L286.3,210.9 L286.1,215.8 L293.5,212.0 L296.0,211.0 L297.4,213.8 L300.7,213.8 L302.3,221.1 L304.5,219.4 L308.6,219.6 L309.9,221.8 L312.7,223.4 L314.3,225.9 L317.0,228.0 L320.1,228.3 L323.6,229.8 L327.5,230.1 L330.5,229.0 L332.4,229.9 L336.5,230.6 L339.1,231.9 L342.2,230.1 L344.9,231.0 L349.0,232.0 L352.5,232.4 L350.9,229.7 L357.4,231.5 L361.9,230.0 L363.1,231.2 L368.0,230.2 L369.9,229.9 L373.0,229.0 L373.0,234.0 L370.2,235.0 L365.7,236.1 L363.2,236.6 L359.7,237.2 L356.0,239.0 L354.0,238.6 L349.4,240.5 L348.0,240.6 L344.8,240.7 L341.7,240.3 L339.8,236.3 L335.7,241.4 L331.0,239.9 L329.5,241.1 L326.9,242.4 L323.7,237.8 L320.4,242.2 L317.0,242.0 L313.2,243.8 L310.0,245.0 L311.3,248.4 L315.0,250.7 L318.7,255.1 L319.0,255.0 L320.6,257.9 L322.6,259.1 L323.2,262.3 L322.9,265.6 L326.7,270.2 L324.3,273.7 L323.4,275.5 L322.4,276.7 L321.0,281.0 L319.8,278.6 L317.5,275.9 L315.0,273.0 L311.1,271.5 L312.3,267.4 L313.2,261.2 L310.4,259.5 L310.9,258.7 L310.9,255.7 L309.0,252.0 L307.6,249.7 L302.9,247.8 L301.8,246.0 L299.0,243.0 L296.1,243.7 L291.6,245.7 L286.3,244.7 L286.5,247.8 L283.8,249.1 L280.0,249.0 L276.7,249.4 L273.3,246.9 L273.1,249.8 L267.0,247.0 L261.5,244.6 L260.5,250.6 L257.1,251.4 L254.8,252.6 L252.0,255.0 L255.1,255.8 L258.4,256.6 L261.7,257.3 L263.6,258.4 L265.3,259.6 L270.1,260.5 L272.1,262.1 L275.0,263.0 L273.3,266.1 L271.8,268.7 L271.1,272.7 L271.0,275.4 L269.5,278.8 L268.7,280.0 L264.2,281.3 L264.0,286.7 L263.5,289.4 L261.2,289.7 L255.3,292.2 L256.5,293.9 L255.2,296.9 L252.0,299.0 L249.2,302.1 L250.5,301.8 L245.4,304.5 L242.0,306.6 L240.6,308.6 L238.4,311.9 L236.7,313.9 L234.5,311.1 L231.0,317.0 L234.2,318.1 L236.2,320.1 L237.6,324.0 L240.2,325.5 L243.6,325.9 L246.0,329.0 L243.6,329.5 L240.8,336.6 L237.0,333.4 L234.0,335.0 L230.0,334.7 L227.7,329.8 L225.9,333.1 L222.0,332.0 L218.9,334.5 L217.9,335.6 L215.8,338.2 L213.0,340.0 L215.8,341.6 L218.5,342.5 L221.4,348.9 L227.4,342.1 L223.0,347.8 L219.2,349.2 L218.3,353.0 L215.8,354.8 L207.1,356.5 L208.6,359.1 L207.0,361.0 L200.6,357.7 L202.4,361.7 L199.2,354.8 L196.4,353.8 L194.1,346.6 L194.0,354.7 L194.3,357.6 L194.9,358.4 L190.8,363.0 L191.1,367.8 L190.0,370.0 L184.6,378.5 L181.1,373.6 L178.8,373.2 L177.3,375.6 L171.0,369.0 L174.1,371.5 L168.2,370.7 L166.6,367.5 L165.8,365.5 L161.7,364.1 L160.3,363.4 L154.8,359.3 L154.0,361.0 L152.8,357.9 L153.3,355.3 L151.6,352.1 L151.0,348.9 L152.2,345.5 L151.0,343.0 L153.2,339.6 L153.8,338.0 L154.4,334.6 L157.4,335.7 L159.5,329.3 L159.0,321.7 L159.5,320.3 L160.3,318.5 L164.6,317.2 L166.4,315.3 L166.5,312.0 L170.0,311.0 L170.9,304.8 L176.3,303.7 L171.1,301.3 L172.9,299.2 L166.0,296.0 L163.8,289.4 L168.0,290.0 L165.6,286.3 L165.5,284.6 L163.1,280.8 L161.9,278.0 L162.2,272.1 L155.9,274.9 L153.6,274.0 L150.0,272.0 L147.7,272.2 L143.6,273.2 L141.0,274.0 L138.0,276.0 L137.6,279.9 L139.2,283.6 L138.2,284.7 L133.0,290.0 L127.4,294.6 L130.0,295.7 L128.4,299.6 L128.1,303.1 L128.7,307.5 L125.9,307.8 L126.6,312.0 L125.8,314.8 L125.4,319.8 L123.3,323.1 L123.8,322.4 L126.6,326.0 L122.5,329.2 L122.2,332.4 L121.4,335.7 L121.0,340.0 L118.8,343.2 L115.9,342.8 L114.9,347.4 L112.0,350.6 L111.9,354.8 L108.2,354.9 L101.6,359.8 L104.1,359.8 L102.2,363.2 L101.0,365.0 L100.8,362.7 L100.3,358.0 L99.2,356.3 L99.7,357.3 L99.1,348.3 L97.8,346.0 L98.0,343.0 L99.5,340.5 L104.2,337.3 L99.3,332.6 L95.8,327.4 L101.4,326.9 L101.6,322.4 L106.4,321.2 L104.1,317.8 L104.0,314.0 L100.3,314.6 L98.2,311.4 L95.1,315.6 L92.5,309.5 L94.3,310.3 L82.5,308.6 L83.6,308.9 L79.7,312.7 L77.9,309.6 L75.0,310.3 L70.5,310.7 L67.6,309.8 L64.0,311.1 L57.6,309.2 L59.6,310.5 L56.6,311.0 L52.7,312.7 L50.0,312.0 L53.7,310.7 L57.1,308.2 L59.0,306.0 L63.2,305.9 L65.6,304.8 L67.3,307.5 L71.2,304.7 L75.0,304.0 L79.3,304.2 L84.2,304.1 L81.4,304.9 L89.0,303.0 L92.1,299.8 L94.6,305.1 L95.6,302.5 L101.8,299.8 L104.3,298.0 L108.0,298.0 L107.7,295.5 L108.6,290.9 L107.7,288.0 L107.2,284.0 L107.8,280.4 L107.0,278.0 L106.6,274.3 L106.7,270.9 L106.7,268.5 L107.1,265.5 L108.0,262.0 L111.4,261.4 L117.0,261.7 L117.0,259.3 L121.0,257.9 L124.2,257.9 L128.3,253.0 L132.7,256.9 L132.4,254.1 L134.0,250.7 L136.6,249.0 L139.0,246.0 L141.5,248.6 L144.0,253.7 L145.0,256.0 L148.0,257.4 L147.0,253.8 L153.1,255.8 L154.2,257.1 L160.3,258.1 L162.9,258.2 L166.0,258.0 L167.7,255.4 L166.8,257.4 L170.4,248.5 L172.1,247.0 L173.0,244.7 L174.5,240.1 L176.0,238.0 L175.4,234.7 L173.9,232.9 L174.0,229.0 L172.8,223.0 L171.8,222.7 L169.1,219.1 L166.0,217.0 L167.2,212.6 L167.9,211.3 L167.2,207.4 L167.6,203.1 L167.8,200.4 L169.4,196.4 L169.0,194.0 L166.2,192.8 L163.4,192.4 L160.6,190.2 L158.6,189.6 L154.2,188.4 L152.7,186.1 L149.0,186.0 L147.8,183.0 L145.5,179.3 L145.9,173.4 L144.4,176.4 L140.4,172.2 L137.6,170.3 L136.7,165.3 L134.0,165.4 L131.9,164.1 L128.1,161.5 L126.0,160.0 L123.7,158.2 L116.7,155.9 L115.9,156.8 L114.4,156.7 L112.0,152.0 L109.6,150.4 L106.9,149.6 Z" fill="rgba(238,64,64,0.6)" stroke="#dc2828" stroke-width="3.6" stroke-linejoin="miter" stroke-miterlimit="3"/>
<path d="M209.0,151.0 L209.0,260.0" fill="none" stroke="#f0a090" stroke-width="1" opacity="0.8"/>
<path d="M134.0,157.0 L169.0,186.0 L206.0,197.0 L240.0,220.0" fill="none" stroke="#f0a090" stroke-width="1" opacity="0.8"/>
<path d="M200.0,290.0 L230.0,310.0 L260.0,300.0" fill="none" stroke="#f0a090" stroke-width="1" opacity="0.8"/>
<path d="M180.0,320.0 L210.0,330.0 L230.0,360.0" fill="none" stroke="#f0a090" stroke-width="1" opacity="0.8"/>
<path d="M190.0,260.0 L230.0,265.0 L270.0,240.0" fill="none" stroke="#f0a090" stroke-width="1" opacity="0.8"/>
<ellipse cx="231" cy="247" rx="14" ry="9" fill="#d96a78" opacity="0.45"/>
</g></svg>
<svg class="abs" style="left:126px;top:235px" width="422" height="499" viewBox="0 0 422 499">
  
  <!-- pins -->
  <g>
    <path d="M176,293 C170,284 163,279 163,271 A13,13 0 0 1 189,271 C189,279 182,284 176,293 Z" fill="#d92a45"/>
    <circle cx="176" cy="269" r="5" fill="#fff"/>
    <path d="M198,287 C194,282 189,279 189,274 A9,9 0 0 1 207,274 C207,279 202,282 198,287 Z" fill="#1f2a8c"/>
    <path d="M191,296 C187,291 183,288 183,283 A8.5,8.5 0 0 1 200,283 C200,288 195,291 191,296 Z" fill="#1f2a8c"/>
    <path d="M202,303 C198,298 194,295 194,290 A8.5,8.5 0 0 1 211,290 C211,295 206,298 202,303 Z" fill="#1f2a8c"/>
    <path d="M200,279 C196,274 192,271 192,266 A8.5,8.5 0 0 1 209,266 C209,271 204,274 200,279 Z" fill="#2e9cc8"/>
    <path d="M220,283 C216,278 212,275 212,270 A8.5,8.5 0 0 1 229,270 C229,275 224,278 220,283 Z" fill="#2e9cc8"/>
    <path d="M227,288 C223,283 219,280 219,275 A8,8 0 0 1 235,275 C235,280 231,283 227,288 Z" fill="#2e9cc8"/>
    <path d="M212,292 C209,288 206,286 206,282 A6.5,6.5 0 0 1 219,282 C219,286 215,288 212,292 Z" fill="#2e9cc8"/>
    <circle cx="200" cy="266" r="2.5" fill="#fff"/><circle cx="220" cy="270" r="2.5" fill="#fff"/><circle cx="227" cy="275" r="2.5" fill="#fff"/>
    <circle cx="197" cy="273.5" r="2.5" fill="#fff"/><circle cx="191" cy="283" r="2.3" fill="#fff"/>
    <path d="M201,297 C198,293 195,291 195,287 A6,6 0 0 1 207,287 C207,291 204,293 201,297 Z" fill="#8ec3ee" stroke="#fff" stroke-width="0.6"/>
    <path d="M184,304 C181,300 178,298 178,294 A6,6 0 0 1 190,294 C190,298 187,300 184,304 Z" fill="#8ec3ee" stroke="#fff" stroke-width="0.6"/>
    <path d="M177,313 C174,309 171,307 171,303 A6,6 0 0 1 183,303 C183,307 180,309 177,313 Z" fill="#8ec3ee" stroke="#fff" stroke-width="0.6"/>
    <path d="M211,306 C208,302 205,300 205,296 A6,6 0 0 1 217,296 C217,300 214,302 211,306 Z" fill="#8ec3ee" stroke="#fff" stroke-width="0.6"/>
    <path d="M217,284 C214,280 211,278 211,274 A6,6 0 0 1 223,274 C223,278 220,280 217,284 Z" fill="#8ec3ee" stroke="#fff" stroke-width="0.6"/>
    <circle cx="201" cy="287" r="2" fill="#fff"/><circle cx="184" cy="294" r="2" fill="#fff"/><circle cx="177" cy="303" r="2" fill="#fff"/><circle cx="211" cy="296" r="2" fill="#fff"/><circle cx="217" cy="274" r="2" fill="#fff"/>
  </g>
  <!-- mapbox logo -->
  <g opacity="0.9">
    <circle cx="19" cy="481" r="9.5" fill="#fff" fill-opacity="0.9" stroke="#7d7d7d" stroke-width="1.4"/>
    <path d="M15,485 L16.5,478 Q20,476 22.5,479 Q23,483 19,484 Z" fill="#888"/>
  </g>
  <text x="31" y="487" font-family="Liberation Sans" font-weight="700" font-size="16.5" fill="#fff" fill-opacity="0.9" stroke="#7d7d7d" stroke-width="1" letter-spacing="-0.5">mapbox</text>
  <!-- info -->
  <circle cx="398.5" cy="480.5" r="11" fill="#fff"/>
  <circle cx="398.5" cy="480.5" r="7" fill="#000"/>
  <rect x="397.6" y="479" width="1.9" height="5" fill="#fff"/>
  <circle cx="398.5" cy="476.8" r="1.1" fill="#fff"/>
</svg>
<!-- dropdown -->
<div class="abs" style="left:141.5px;top:251px;width:197.5px;height:39.5px;border-radius:6px;background:#fdfdfc;box-shadow:0 1px 4px rgba(0,0,0,0.14)"></div>
<div class="abs" style="left:153px;top:264px;width:14.5px;height:14.5px;border-radius:50%;background:#e63b3b"></div>
<div class="t" style="left:179.5px;top:263.8px;font-size:10.3px;font-weight:700;color:#222;letter-spacing:-0.1px">Isócrona de Acessibilidade</div>
<svg class="abs" style="left:315px;top:263px" width="12" height="10" viewBox="0 0 12 10"><path d="M2.5,3.2 L6,6.8 L9.5,3.2" fill="none" stroke="#333" stroke-width="1.4"/></svg>
<!-- zoom ctrl -->
<div class="abs" style="left:507.5px;top:245.5px;width:30px;height:88px;border-radius:5px;background:#fff;box-shadow:0 0 0 2px rgba(0,0,0,0.1)"></div>
<div class="abs" style="left:507.5px;top:274.8px;width:30px;height:1px;background:#ddd"></div>
<div class="abs" style="left:507.5px;top:304.2px;width:30px;height:1px;background:#ddd"></div>
<svg class="abs" style="left:507.5px;top:245.5px" width="30" height="88" viewBox="0 0 30 88">
  <path d="M15,9.5 V19.5 M10,14.5 H20" stroke="#333" stroke-width="2.4"/>
  <path d="M10,44 H20" stroke="#333" stroke-width="2.4"/>
  <path d="M15,65.5 L19,74 H11 Z" fill="#333"/>
  <path d="M15,82 L19,74 H11 Z" fill="#ccc"/>
</svg>
<div id="chart" class="abs"></div>
<div class="t" style="left:578.5px;top:252.3px;font-size:16.07px;font-weight:700;color:#111827">Preços por Área - Novos vs Usados</div>
<div class="abs" style="left:921px;top:297px;width:12px;height:12px;border-radius:50%;background:#2a9fd3"></div>
<div class="t" style="left:936.6px;top:296.4px;font-size:12.25px;color:#374151">Novos</div>
<div class="abs" style="left:992px;top:297px;width:12px;height:12px;border-radius:50%;background:#1e2a96"></div>
<div class="t" style="left:1007.6px;top:296.4px;font-size:12.25px;color:#374151">Usados</div>

<div class="yl" style="top:332.2px">16.0k/m²</div>
<div class="yl" style="top:420.4px">12.0k/m²</div>
<div class="yl" style="top:508.5px">8.0k/m²</div>
<div class="yl" style="top:596.6px">4.0k/m²</div>
<div class="yl" style="top:684.7px">R$ 0/m²</div>

<div class="abs" style="left:833px;top:340.5px;width:92.3px;height:350.5px;background:linear-gradient(#f8f9fb,#f2f5f9)"></div>

<div class="bar nv" style="left:668.5px;top:491.6px;width:27.4px;height:199.4px"></div>
<div class="bar us" style="left:696px;top:505.5px;width:27.4px;height:185.5px"></div>
<div class="bar nv" style="left:760.3px;top:470.5px;width:27.5px;height:220.5px"></div>
<div class="bar us" style="left:788px;top:530px;width:27.2px;height:161px"></div>
<div class="bar nv" style="left:851.8px;top:540.5px;width:27.3px;height:150.5px"></div>
<div class="bar us" style="left:879.2px;top:556.5px;width:27.5px;height:134.5px"></div>
<div class="bar nv" style="left:943.3px;top:500px;width:27.3px;height:191px"></div>
<div class="bar us" style="left:970.7px;top:543px;width:27.5px;height:148px"></div>
<div class="bar nv" style="left:1035px;top:436.3px;width:27.6px;height:254.7px"></div>
<div class="bar us" style="left:1062.7px;top:511px;width:27.4px;height:180px"></div>
<div class="bar nv" style="left:1126.7px;top:376.6px;width:27.3px;height:314.4px"></div>
<div class="bar us" style="left:1154px;top:494.7px;width:27.5px;height:196.3px"></div>
<div class="bar us" style="left:1245.8px;top:536.9px;width:27.3px;height:154.1px"></div>
<div class="bar us" style="left:1337.4px;top:445.7px;width:27.3px;height:245.3px"></div>

<div class="xl" style="left:645.9px">≤ 40 m²</div>
<div class="xl" style="left:737.8px">&gt; 40 m²</div>
<div class="xl" style="left:828.9px">≤ 75 m²</div>
<div class="xl" style="left:920.6px">≤ 100 m²</div>
<div class="xl" style="left:1012.7px">100 - 150 m²</div>
<div class="xl" style="left:1104px">150 - 200 m²</div>
<div class="xl" style="left:1195.5px">&gt; 75 m²</div>
<div class="xl" style="left:1287px">&gt; 200 m²</div>

<!-- tooltip -->
<div class="abs" style="left:885.7px;top:486.3px;width:163.3px;height:97.5px;border-radius:5px;overflow:hidden;box-shadow:0 2px 6px rgba(0,0,0,0.12),0 0 0 1px rgba(0,0,0,0.06)">
  <div class="abs" style="left:0;top:0;width:100%;height:30.3px;background:#e7eaed;border-bottom:1px solid #d9dde2"></div>
  <div class="abs" style="left:0;top:30.3px;width:100%;height:67.2px;background:rgba(255,255,255,0.52);backdrop-filter:blur(3px);-webkit-backdrop-filter:blur(3px)"></div>
</div>
<div class="t" style="left:892.5px;top:494.2px;font-size:12.55px;color:#111827">≤ 75 m²</div>
<div class="abs" style="left:896px;top:527.9px;width:12px;height:12px;border-radius:50%;background:#2a9fd3"></div>
<div class="t" style="left:918.6px;top:528.3px;font-size:12.3px;color:#111827">Novos:</div>
<div class="t" style="left:966.5px;top:528px;font-size:12.86px;font-weight:700;color:#111827">R$ 6.9k/m²</div>
<div class="abs" style="left:896px;top:559px;width:12px;height:12px;border-radius:50%;background:#1e2a96"></div>
<div class="t" style="left:918.6px;top:559.6px;font-size:12.37px;color:#111827">Usados:</div>
<div class="t" style="left:973.4px;top:559.3px;font-size:12.86px;font-weight:700;color:#111827">R$ 6.2k/m²</div>
<div id="card2" class="abs">
  <div class="abs" style="left:0;top:66px;width:100%;height:44.5px;background:#f9fafb;border-top:1px solid #d5d9df;border-bottom:1px solid #e2e5e9"></div>
  <div class="abs" style="left:249px;top:67px;width:1px;height:43px;background:#e5e7eb"></div>
</div>
<div class="t" style="left:140.9px;top:769.4px;font-size:17.15px;color:#111827;-webkit-text-stroke:0.25px #111827">Análise de Preços por Tipologia</div>
<div class="t" style="left:140.9px;top:795.2px;font-size:13.76px;color:#6b7280">Análise de mercado por tipologia de área</div>
<div class="t" style="left:148.4px;top:840.4px;font-size:10px;font-weight:700;color:#1f2937">Área</div>
<div class="t" style="left:829px;top:839.9px;font-size:11px;font-weight:700;color:#1f2937">PRECIFICAÇÃO (R$/M²)</div>
<div class="t" style="left:147.4px;top:909.5px;font-size:11px;color:#111827">≤ 40 m²</div>
<div class="t" style="left:398.7px;top:884.9px;font-size:12.2px;font-weight:700;color:#2e42d2">Mercado de Usados</div>
<div class="t" style="left:525.5px;top:885px;font-size:12px;color:#6b7280;-webkit-text-stroke:0.2px #6b7280">(imóveis)</div>
<div class="t" style="left:398.7px;top:908.1px;font-size:10.7px;font-weight:700;color:#15803d">R$ 8.492,97</div>
<div class="abs" style="left:464.9px;top:907px;width:35.8px;height:24px;border-radius:12px;background:#f3f4f6;border:1px solid #d1d5db"></div>
<div class="t" style="left:474px;top:911px;font-size:12px;font-weight:700;color:#374151">0%</div>
<div class="t" style="left:918.6px;top:888.8px;font-size:12.2px;font-weight:700;color:#2e42d2">Mercado de Novos</div>
<div class="t" style="left:1038.5px;top:889px;font-size:12px;color:#6b7280;-webkit-text-stroke:0.2px #6b7280">(projetos)</div>
<div class="t" style="left:918.6px;top:911.3px;font-size:10.3px;font-weight:700;color:#2e42d2">R$ 9.133,96</div>
</body></html>
